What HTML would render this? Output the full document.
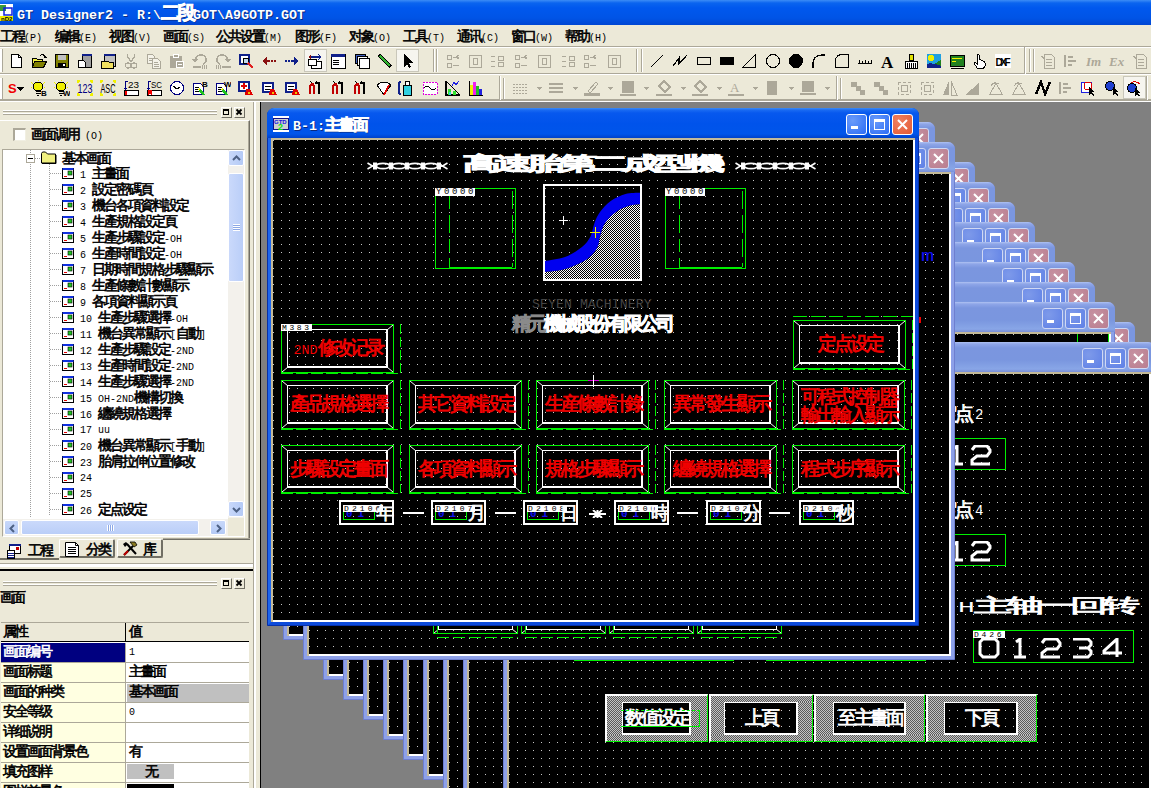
<!DOCTYPE html><html><head><meta charset="utf-8"><style>
*{margin:0;padding:0;box-sizing:border-box}
html,body{width:1151px;height:788px;overflow:hidden;background:#ECE9D8;font-family:"Liberation Sans",sans-serif;font-size:12px;position:relative}
div,svg{position:absolute}
b{font-weight:normal}
.a{font-family:"Liberation Mono",monospace;white-space:pre}
.c{display:inline-block;text-align:center;overflow:visible;white-space:nowrap}
.t{white-space:nowrap}
.act{background:linear-gradient(#3D8DF7 0,#1A6BF2 2px,#0758EE 5px,#0053EB 16px,#0055EA 26px,#0041C9 30px)}
.ina{background:linear-gradient(#B0C2F2 0,#8FA6E8 2px,#7B96DF 6px,#7A96DF 18px,#88A6E7 27px,#7B8FD8 30px)}
.dots{background-color:#000;background-image:linear-gradient(90deg,transparent 1px,#000 1px),linear-gradient(#C8C8C8 1px,#000 1px);background-size:8px 8px}
.chk{background:repeating-conic-gradient(#fff 0 25%,#000 0 50%) 0 0/2px 2px}
.gd{background:repeating-conic-gradient(#D8D8D8 0 25%,#808080 0 50%) 0 0/2px 2px}
</style></head><body>
<div style="left:0px;top:0px;width:1151px;height:25px;background:linear-gradient(#3C8CF6 0,#0A64EF 3px,#0058EE 8px,#0054E6 18px,#0046D3 25px)"></div>
<svg style="left:0;top:4px" width="14" height="17" viewBox="0 0 14 17"><rect x="0" y="0" width="13" height="12" fill="#fff"/><rect x="0" y="1" width="6" height="6" fill="#3A9A3A"/><rect x="4" y="4" width="8" height="7" fill="none" stroke="#1020E0" stroke-width="1.5"/><rect x="0" y="12" width="13" height="5" fill="#F0F000"/><text x="1" y="16.5" font-size="6" font-family="Liberation Sans" font-weight="bold" fill="#000">nD2</text></svg>
<div class="t" style="left:17px;top:5px;color:#fff;line-height:16px;text-shadow:1px 1px #0A2A80"><b class="a" style="font-weight:bold;font-size:13.33px;letter-spacing:0.00px">GT Designer2 - R:\</b><b class="c" style="font-weight:bold;width:16px;font-size:18.7px;-webkit-text-stroke:0.80px currentColor">二</b><b class="c" style="font-weight:bold;width:16px;font-size:18.7px;-webkit-text-stroke:0.80px currentColor">段</b><b class="a" style="font-weight:bold;font-size:13.33px;letter-spacing:0.00px">GOT\A9GOTP.GOT</b></div>
<div class="t" style="left:0px;top:29px;color:#000;line-height:14px;"><b class="c" style="width:12px;font-size:14.0px;-webkit-text-stroke:0.60px currentColor">工</b><b class="c" style="width:12px;font-size:14.0px;-webkit-text-stroke:0.60px currentColor">程</b><b class="a" style="font-size:10.00px;letter-spacing:0.00px">(P)</b></div>
<div class="t" style="left:55px;top:29px;color:#000;line-height:14px;"><b class="c" style="width:12px;font-size:14.0px;-webkit-text-stroke:0.60px currentColor">编</b><b class="c" style="width:12px;font-size:14.0px;-webkit-text-stroke:0.60px currentColor">辑</b><b class="a" style="font-size:10.00px;letter-spacing:0.00px">(E)</b></div>
<div class="t" style="left:109px;top:29px;color:#000;line-height:14px;"><b class="c" style="width:12px;font-size:14.0px;-webkit-text-stroke:0.60px currentColor">视</b><b class="c" style="width:12px;font-size:14.0px;-webkit-text-stroke:0.60px currentColor">图</b><b class="a" style="font-size:10.00px;letter-spacing:0.00px">(V)</b></div>
<div class="t" style="left:163px;top:29px;color:#000;line-height:14px;"><b class="c" style="width:12px;font-size:14.0px;-webkit-text-stroke:0.60px currentColor">画</b><b class="c" style="width:12px;font-size:14.0px;-webkit-text-stroke:0.60px currentColor">面</b><b class="a" style="font-size:10.00px;letter-spacing:0.00px">(S)</b></div>
<div class="t" style="left:216px;top:29px;color:#000;line-height:14px;"><b class="c" style="width:12px;font-size:14.0px;-webkit-text-stroke:0.60px currentColor">公</b><b class="c" style="width:12px;font-size:14.0px;-webkit-text-stroke:0.60px currentColor">共</b><b class="c" style="width:12px;font-size:14.0px;-webkit-text-stroke:0.60px currentColor">设</b><b class="c" style="width:12px;font-size:14.0px;-webkit-text-stroke:0.60px currentColor">置</b><b class="a" style="font-size:10.00px;letter-spacing:0.00px">(M)</b></div>
<div class="t" style="left:295px;top:29px;color:#000;line-height:14px;"><b class="c" style="width:12px;font-size:14.0px;-webkit-text-stroke:0.60px currentColor">图</b><b class="c" style="width:12px;font-size:14.0px;-webkit-text-stroke:0.60px currentColor">形</b><b class="a" style="font-size:10.00px;letter-spacing:0.00px">(F)</b></div>
<div class="t" style="left:349px;top:29px;color:#000;line-height:14px;"><b class="c" style="width:12px;font-size:14.0px;-webkit-text-stroke:0.60px currentColor">对</b><b class="c" style="width:12px;font-size:14.0px;-webkit-text-stroke:0.60px currentColor">象</b><b class="a" style="font-size:10.00px;letter-spacing:0.00px">(O)</b></div>
<div class="t" style="left:403px;top:29px;color:#000;line-height:14px;"><b class="c" style="width:12px;font-size:14.0px;-webkit-text-stroke:0.60px currentColor">工</b><b class="c" style="width:12px;font-size:14.0px;-webkit-text-stroke:0.60px currentColor">具</b><b class="a" style="font-size:10.00px;letter-spacing:0.00px">(T)</b></div>
<div class="t" style="left:457px;top:29px;color:#000;line-height:14px;"><b class="c" style="width:12px;font-size:14.0px;-webkit-text-stroke:0.60px currentColor">通</b><b class="c" style="width:12px;font-size:14.0px;-webkit-text-stroke:0.60px currentColor">讯</b><b class="a" style="font-size:10.00px;letter-spacing:0.00px">(C)</b></div>
<div class="t" style="left:511px;top:29px;color:#000;line-height:14px;"><b class="c" style="width:12px;font-size:14.0px;-webkit-text-stroke:0.60px currentColor">窗</b><b class="c" style="width:12px;font-size:14.0px;-webkit-text-stroke:0.60px currentColor">口</b><b class="a" style="font-size:10.00px;letter-spacing:0.00px">(W)</b></div>
<div class="t" style="left:565px;top:29px;color:#000;line-height:14px;"><b class="c" style="width:12px;font-size:14.0px;-webkit-text-stroke:0.60px currentColor">帮</b><b class="c" style="width:12px;font-size:14.0px;-webkit-text-stroke:0.60px currentColor">助</b><b class="a" style="font-size:10.00px;letter-spacing:0.00px">(H)</b></div>
<div style="left:0px;top:46px;width:1151px;height:1px;background:#ACA899"></div>
<div style="left:0px;top:47px;width:1151px;height:1px;background:#fff"></div>
<div style="left:0px;top:73px;width:1151px;height:1px;background:#ACA899"></div>
<div style="left:0px;top:74px;width:1151px;height:1px;background:#fff"></div>
<div style="left:0px;top:99px;width:1151px;height:1px;background:#ACA899"></div>
<div style="left:0px;top:100px;width:1151px;height:1px;background:#ACA899"></div>
<div style="left:0px;top:101px;width:1151px;height:1px;background:#fff"></div>
<div style="left:0px;top:49px;width:3px;height:23px;border-left:2px solid #fff;border-right:1px solid #ACA899"></div>
<div style="left:304px;top:49px;width:23px;height:23px;background:#F6F5EF;border:1px solid #C9C7BA"></div>
<div style="left:396px;top:49px;width:23px;height:23px;background:#F6F5EF;border:1px solid #C9C7BA"></div>
<div style="left:433px;top:49px;width:2px;height:23px;border-left:1px solid #ACA899;border-right:1px solid #fff"></div>
<div style="left:436px;top:49px;width:2px;height:23px;border-left:1px solid #ACA899;border-right:1px solid #fff"></div>
<div style="left:636px;top:49px;width:2px;height:23px;border-left:1px solid #ACA899;border-right:1px solid #fff"></div>
<div style="left:641px;top:49px;width:2px;height:23px;border-left:1px solid #ACA899;border-right:1px solid #fff"></div>
<div style="left:1024px;top:47px;width:2px;height:27px;border-left:1px solid #ACA899;border-right:1px solid #fff"></div>
<div style="left:1029px;top:49px;width:2px;height:23px;border-left:1px solid #ACA899;border-right:1px solid #fff"></div>
<div style="left:1033px;top:49px;width:2px;height:23px;border-left:1px solid #ACA899;border-right:1px solid #fff"></div>
<svg style="left:8px;top:53px" width="16" height="16" viewBox="0 0 16 16" shape-rendering="crispEdges"><path d="M3.5 1.5h7l3 3v10h-10z" fill="#fff" stroke="#000"/><path d="M10.5 1.5v3h3" fill="none" stroke="#000"/></svg>
<svg style="left:31px;top:53px" width="16" height="16" viewBox="0 0 16 16" shape-rendering="crispEdges"><path d="M1.5 5.5h4l1 1h5v2h-8l-2 6z" fill="#F0F040" stroke="#000"/><path d="M1.5 14.5l2-6h12l-3 6z" fill="#808000" stroke="#000"/><path d="M8.5 3.5q2-3 5-1l1 2" fill="none" stroke="#000"/><path d="M13 5h3l-1.5-2z" fill="#000"/></svg>
<svg style="left:54px;top:53px" width="16" height="16" viewBox="0 0 16 16" shape-rendering="crispEdges"><rect x="1.5" y="1.5" width="13" height="13" fill="#808000" stroke="#000"/><rect x="4" y="2" width="8" height="5" fill="#C0C0C0"/><rect x="4" y="10" width="8" height="4" fill="#000"/><rect x="9" y="11" width="2" height="2" fill="#fff"/></svg>
<svg style="left:77px;top:53px" width="16" height="16" viewBox="0 0 16 16" shape-rendering="crispEdges"><rect x="5.5" y="1.5" width="9" height="13" fill="#A0A0A0" stroke="#000"/><rect x="5" y="1" width="10" height="2" fill="#10208A"/><path d="M1.5 7.5h5l2 2v5h-7z" fill="#fff" stroke="#000"/></svg>
<svg style="left:100px;top:53px" width="16" height="16" viewBox="0 0 16 16" shape-rendering="crispEdges"><rect x="4" y="1" width="11" height="12" fill="#C0C0C0" stroke="#000"/><rect x="4" y="1" width="11" height="2" fill="#10208A"/><path d="M1 8h7l1 1h4v6H1z" fill="#F0E060" stroke="#000"/></svg>
<svg style="left:123px;top:53px" width="16" height="16" viewBox="0 0 16 16" shape-rendering="crispEdges"><path d="M4.5 1v3l4 5M11.5 1v3l-4 5" fill="none" stroke="#ACA899" stroke-width="1.4"/><circle cx="5" cy="12.5" r="2.5" fill="none" stroke="#ACA899" stroke-width="1.3"/><circle cx="11" cy="12.5" r="2.5" fill="none" stroke="#ACA899" stroke-width="1.3"/></svg>
<svg style="left:146px;top:53px" width="16" height="16" viewBox="0 0 16 16" shape-rendering="crispEdges"><path d="M1.5 1.5h5l2 2v7h-7z" fill="#F4F2E8" stroke="#ACA899"/><path d="M6.5 5.5h5l3 3v7h-8z" fill="#F4F2E8" stroke="#ACA899"/><path d="M3 5h3M3 7h3M8 9h4M8 11h5M8 13h5" stroke="#ACA899"/></svg>
<svg style="left:169px;top:53px" width="16" height="16" viewBox="0 0 16 16" shape-rendering="crispEdges"><rect x="1" y="3" width="12" height="12" rx="1" fill="#ACA899"/><rect x="4.5" y="1.5" width="5" height="3" fill="#ACA899" stroke="#fff"/><rect x="7.5" y="8.5" width="7" height="6" fill="#ACA899" stroke="#fff"/><path d="M9 11h4" stroke="#fff"/></svg>
<svg style="left:192px;top:53px" width="16" height="16" viewBox="0 0 16 16" shape-rendering="crispEdges"><path d="M3 8q1-6 6-6q5 0 5 5q0 3-3 4" fill="none" stroke="#ACA899" stroke-width="1.6"/><path d="M0 6l3 4l3-4z" fill="#ACA899"/><path d="M1 14h8" stroke="#ACA899" stroke-width="2"/><path d="M10 12v4M12 12v4M14 12v4" stroke="#ACA899"/></svg>
<svg style="left:215px;top:53px" width="16" height="16" viewBox="0 0 16 16" shape-rendering="crispEdges"><path d="M13 8q-1-6-6-6q-5 0-5 5q0 3 3 4" fill="none" stroke="#ACA899" stroke-width="1.6"/><path d="M16 6l-3 4l-3-4z" fill="#ACA899"/><path d="M7 14h9" stroke="#ACA899" stroke-width="2"/><path d="M1 12v4M3 12v4M5 12v4" stroke="#ACA899"/></svg>
<svg style="left:239px;top:53px" width="16" height="16" viewBox="0 0 16 16" shape-rendering="crispEdges"><rect x="1" y="2" width="9" height="9" fill="#fff" stroke="#10208A" stroke-width="1.5"/><circle cx="7" cy="8" r="3" fill="#C0D8F0" stroke="#000"/><path d="M9 10l5 5" stroke="#E02020" stroke-width="1.5"/></svg>
<svg style="left:261px;top:53px" width="16" height="16" viewBox="0 0 16 16" shape-rendering="crispEdges"><path d="M1 8l5-4v3h3v2H6v3z" fill="#8A1010"/><path d="M10 7h2v2h-2zM13 7h2v2h-2z" fill="#8A1010"/></svg>
<svg style="left:284px;top:53px" width="16" height="16" viewBox="0 0 16 16" shape-rendering="crispEdges"><path d="M15 8l-5-4v3H7v2h3v3z" fill="#10208A"/><path d="M1 7h2v2H1zM4 7h2v2H4z" fill="#10208A"/></svg>
<svg style="left:307px;top:53px" width="16" height="16" viewBox="0 0 16 16" shape-rendering="crispEdges"><path d="M2 4h12M11 1l3 3l-3 3" fill="none" stroke="#10208A" stroke-width="1.2"/><path d="M1 4l3-3v6z" fill="#8A1010"/><rect x="4" y="8" width="10" height="7" fill="#fff" stroke="#000"/><rect x="1" y="6" width="8" height="6" fill="#fff" stroke="#000"/></svg>
<svg style="left:330px;top:53px" width="16" height="16" viewBox="0 0 16 16" shape-rendering="crispEdges"><rect x="1" y="1" width="14" height="14" fill="#fff" stroke="#000"/><rect x="1" y="1" width="14" height="3" fill="#10208A"/><path d="M3 7h6M3 9h6M3 11h6" stroke="#000"/></svg>
<svg style="left:354px;top:53px" width="16" height="16" viewBox="0 0 16 16" shape-rendering="crispEdges"><rect x="1" y="1" width="10" height="9" fill="#4060C0" stroke="#000"/><rect x="3" y="3" width="10" height="9" fill="#fff" stroke="#000"/><rect x="5" y="5" width="10" height="10" fill="#fff" stroke="#000"/></svg>
<svg style="left:377px;top:53px" width="16" height="16" viewBox="0 0 16 16" shape-rendering="crispEdges"><path d="M2 2l12 12" stroke="#000" stroke-width="3"/><path d="M3 3l10 10" stroke="#30B030" stroke-width="1.5"/></svg>
<svg style="left:400px;top:53px" width="16" height="16" viewBox="0 0 16 16" shape-rendering="crispEdges"><path d="M4 1v13l3-3l2 4l2-1l-2-4h4z" fill="#000"/></svg>
<svg style="left:445px;top:53px" width="16" height="16" viewBox="0 0 16 16" shape-rendering="crispEdges"><path d="M2 2h4v4H2zM2 10h4v4H2z" fill="none" stroke="#ACA899"/><path d="M8 4h6M8 12h6M14 2l-3 2l3 2" fill="none" stroke="#ACA899"/></svg>
<svg style="left:467px;top:53px" width="16" height="16" viewBox="0 0 16 16" shape-rendering="crispEdges"><rect x="2" y="2" width="12" height="12" fill="none" stroke="#ACA899"/><rect x="6" y="5" width="4" height="6" fill="none" stroke="#ACA899"/></svg>
<svg style="left:489px;top:53px" width="16" height="16" viewBox="0 0 16 16" shape-rendering="crispEdges"><path d="M2 3h4M2 8h4M2 13h4M9 3h5v4H9zM9 9h5v4H9z" fill="none" stroke="#ACA899"/></svg>
<svg style="left:513px;top:53px" width="16" height="16" viewBox="0 0 16 16" shape-rendering="crispEdges"><path d="M2 2h4v4H2zM2 10h4v4H2z" fill="none" stroke="#ACA899"/><path d="M8 4h6M8 12h6M14 2l-3 2l3 2" fill="none" stroke="#ACA899"/></svg>
<svg style="left:536px;top:53px" width="16" height="16" viewBox="0 0 16 16" shape-rendering="crispEdges"><rect x="2" y="2" width="12" height="12" fill="none" stroke="#ACA899"/><rect x="6" y="5" width="4" height="6" fill="none" stroke="#ACA899"/></svg>
<svg style="left:560px;top:53px" width="16" height="16" viewBox="0 0 16 16" shape-rendering="crispEdges"><path d="M2 3h4M2 8h4M2 13h4M9 3h5v4H9zM9 9h5v4H9z" fill="none" stroke="#ACA899"/></svg>
<svg style="left:582px;top:53px" width="16" height="16" viewBox="0 0 16 16" shape-rendering="crispEdges"><path d="M2 2h4v4H2zM2 10h4v4H2z" fill="none" stroke="#ACA899"/><path d="M8 4h6M8 12h6M14 2l-3 2l3 2" fill="none" stroke="#ACA899"/></svg>
<svg style="left:606px;top:53px" width="16" height="16" viewBox="0 0 16 16" shape-rendering="crispEdges"><rect x="2" y="2" width="12" height="12" fill="none" stroke="#ACA899"/><rect x="6" y="5" width="4" height="6" fill="none" stroke="#ACA899"/></svg>
<svg style="left:649px;top:53px" width="16" height="16" viewBox="0 0 16 16" shape-rendering="crispEdges"><path d="M2 14L14 2" stroke="#000" stroke-width="1.2"/></svg>
<svg style="left:672px;top:53px" width="16" height="16" viewBox="0 0 16 16" shape-rendering="crispEdges"><path d="M1 13l6-8v6l8-9" fill="none" stroke="#000" stroke-width="1.2"/></svg>
<svg style="left:696px;top:53px" width="16" height="16" viewBox="0 0 16 16" shape-rendering="crispEdges"><rect x="1.5" y="4.5" width="13" height="7" fill="none" stroke="#000"/></svg>
<svg style="left:719px;top:53px" width="16" height="16" viewBox="0 0 16 16" shape-rendering="crispEdges"><rect x="1" y="4" width="14" height="8" fill="#000"/></svg>
<svg style="left:741px;top:53px" width="16" height="16" viewBox="0 0 16 16" shape-rendering="crispEdges"><path d="M1.5 14.5h13v-13z" fill="none" stroke="#000"/></svg>
<svg style="left:765px;top:53px" width="16" height="16" viewBox="0 0 16 16" shape-rendering="crispEdges"><circle cx="8" cy="8" r="6.5" fill="none" stroke="#000"/></svg>
<svg style="left:788px;top:53px" width="16" height="16" viewBox="0 0 16 16" shape-rendering="crispEdges"><circle cx="8" cy="8" r="7" fill="#000"/></svg>
<svg style="left:811px;top:53px" width="16" height="16" viewBox="0 0 16 16" shape-rendering="crispEdges"><path d="M2 15v-4q0-9 10-9h2" fill="none" stroke="#000" stroke-width="1.2"/></svg>
<svg style="left:834px;top:53px" width="16" height="16" viewBox="0 0 16 16" shape-rendering="crispEdges"><path d="M1.5 14.5v-6q0-7 7-7h6v13z" fill="none" stroke="#000"/></svg>
<svg style="left:857px;top:53px" width="16" height="16" viewBox="0 0 16 16" shape-rendering="crispEdges"><path d="M1 10h14M2 7v3M5 8v2M8 7v3M11 8v2M14 7v3" fill="none" stroke="#000"/></svg>
<svg style="left:880px;top:53px" width="16" height="16" viewBox="0 0 16 16" shape-rendering="crispEdges"><text x="1" y="15" font-family="Liberation Serif" font-weight="bold" font-size="17" fill="#000">A</text></svg>
<svg style="left:903px;top:53px" width="16" height="16" viewBox="0 0 16 16" shape-rendering="crispEdges"><rect x="6" y="1" width="4" height="6" fill="#E0E000" stroke="#000"/><path d="M2 8h12v7H2z" fill="#fff" stroke="#000"/><path d="M4 10v5M6 10v5M8 10v5M10 10v5M12 10v5" stroke="#000"/></svg>
<svg style="left:926px;top:53px" width="16" height="16" viewBox="0 0 16 16" shape-rendering="crispEdges"><rect x="1" y="1" width="14" height="14" fill="#20A0E0"/><circle cx="5" cy="5" r="3" fill="#F0F000"/><path d="M1 15l14-8v8z" fill="#208020"/><path d="M1 11q6-2 14 2v2H1z" fill="#10208A"/></svg>
<svg style="left:949px;top:53px" width="16" height="16" viewBox="0 0 16 16" shape-rendering="crispEdges"><rect x="1" y="2" width="14" height="11" fill="#208020" stroke="#000"/><path d="M3 5h10M3 8h4" stroke="#F0F000"/><path d="M2 15h13" stroke="#000"/></svg>
<svg style="left:972px;top:53px" width="16" height="16" viewBox="0 0 16 16" shape-rendering="crispEdges"><path d="M5 15l-3-5q0-2 2 0l1 1V2q1-2 2 0v5l1-1q1 0 1 1l1 0q1 0 1 1l1 0q1 1 1 2v3l-2 3z" fill="#fff" stroke="#000"/></svg>
<svg style="left:995px;top:53px" width="16" height="16" viewBox="0 0 16 16" shape-rendering="crispEdges"><rect x="0" y="1" width="16" height="14" fill="#fff"/><text x="0.5" y="12.5" font-family="Liberation Sans" font-weight="bold" font-size="10" fill="#000" textLength="15">DXF</text></svg>
<svg style="left:1040px;top:53px" width="16" height="16" viewBox="0 0 16 16" shape-rendering="crispEdges"><path d="M4 1h7l3 3v11H4z" fill="none" stroke="#ACA899"/><path d="M6 6h6M6 9h6M6 12h6" stroke="#ACA899"/><path d="M1 3l4 3" stroke="#ACA899"/></svg>
<svg style="left:1063px;top:53px" width="16" height="16" viewBox="0 0 16 16" shape-rendering="crispEdges"><path d="M2 2v12M5 4h5M5 8h8M5 12h4" stroke="#ACA899" stroke-width="2"/></svg>
<svg style="left:1086px;top:53px" width="16" height="16" viewBox="0 0 16 16" shape-rendering="crispEdges"><text x="0" y="13" font-family="Liberation Serif" font-style="italic" font-weight="bold" font-size="13" fill="#ACA899">Im</text></svg>
<svg style="left:1109px;top:53px" width="16" height="16" viewBox="0 0 16 16" shape-rendering="crispEdges"><text x="0" y="13" font-family="Liberation Serif" font-style="italic" font-weight="bold" font-size="13" fill="#ACA899">Ex</text></svg>
<svg style="left:1132px;top:53px" width="16" height="16" viewBox="0 0 16 16" shape-rendering="crispEdges"><path d="M4 1h7l3 3v11H4z" fill="none" stroke="#ACA899"/><path d="M6 6h6M6 9h6M6 12h6" stroke="#ACA899"/><path d="M1 3l4 3" stroke="#ACA899"/></svg>
<div style="left:0px;top:78px;width:3px;height:21px;border-left:2px solid #fff;border-right:1px solid #ACA899"></div>
<div style="left:499px;top:76px;width:2px;height:24px;border-left:1px solid #ACA899;border-right:1px solid #fff"></div>
<div style="left:503px;top:78px;width:2px;height:21px;border-left:1px solid #ACA899;border-right:1px solid #fff"></div>
<div style="left:836px;top:76px;width:2px;height:24px;border-left:1px solid #ACA899;border-right:1px solid #fff"></div>
<div style="left:840px;top:78px;width:2px;height:21px;border-left:1px solid #ACA899;border-right:1px solid #fff"></div>
<div style="left:1123px;top:76px;width:23px;height:23px;background:#F6F5EF;border:1px solid #C9C7BA"></div>
<div style="left:1146px;top:76px;width:2px;height:24px;border-left:1px solid #ACA899;border-right:1px solid #fff"></div>
<svg style="left:8px;top:80px" width="16" height="16" viewBox="0 0 16 16" shape-rendering="crispEdges"><text x="0" y="13" font-family="Liberation Sans" font-weight="bold" font-size="13" fill="#F00000">S</text><path d="M9 7h7l-3.5 4z" fill="#000"/></svg>
<svg style="left:31px;top:80px" width="16" height="16" viewBox="0 0 16 16" shape-rendering="crispEdges"><path d="M0 2l2 2M12 4l2-2M7 0v1M0 7h1M13 7h1" stroke="#F0F000"/><circle cx="7" cy="6.5" r="4.5" fill="#F0F000" stroke="#000"/><path d="M4.5 11.5h5M4.5 13.5h5M6 15.5h2" stroke="#000"/><text x="10" y="16" font-size="8" font-family="Liberation Sans" font-weight="bold" fill="#000">B</text></svg>
<svg style="left:54px;top:80px" width="16" height="16" viewBox="0 0 16 16" shape-rendering="crispEdges"><path d="M0 2l2 2M12 4l2-2M7 0v1M0 7h1M13 7h1" stroke="#F0F000"/><circle cx="7" cy="6.5" r="4.5" fill="#F0F000" stroke="#000"/><path d="M4.5 11.5h5M4.5 13.5h5M6 15.5h2" stroke="#000"/><text x="9" y="16" font-size="8" font-family="Liberation Sans" font-weight="bold" fill="#000">W</text></svg>
<svg style="left:77px;top:80px" width="16" height="16" viewBox="0 0 16 16" shape-rendering="crispEdges"><path d="M0 1h3M13 1h3M0 15h3M13 15h3M1 0v3M15 0v3M1 13v3M15 13v3" stroke="#F0F000" stroke-width="2"/><text x="0.5" y="13" font-family="Liberation Sans" font-size="12" fill="#000080" textLength="15" lengthAdjust="spacingAndGlyphs">123</text></svg>
<svg style="left:100px;top:80px" width="16" height="16" viewBox="0 0 16 16" shape-rendering="crispEdges"><path d="M0 1h3M13 1h3M0 15h3M13 15h3M1 0v3M15 0v3M1 13v3M15 13v3" stroke="#F0F000" stroke-width="2"/><text x="0.5" y="13" font-family="Liberation Sans" font-size="12" fill="#000" textLength="15" lengthAdjust="spacingAndGlyphs">ASC</text></svg>
<svg style="left:123px;top:80px" width="16" height="16" viewBox="0 0 16 16" shape-rendering="crispEdges"><text x="5" y="8" font-family="Liberation Sans" font-size="9" fill="#000" textLength="11" lengthAdjust="spacingAndGlyphs">23</text><rect x="1.5" y="10.5" width="14" height="5" fill="#fff" stroke="#000"/><path d="M3 11v4" stroke="#F00000" stroke-width="2"/><path d="M2.5 9V1.5h2" fill="none" stroke="#000080"/><path d="M1 8h3l-1.5 2z" fill="#000080"/></svg>
<svg style="left:146px;top:80px" width="16" height="16" viewBox="0 0 16 16" shape-rendering="crispEdges"><text x="5" y="8" font-family="Liberation Sans" font-size="9" fill="#000" textLength="11" lengthAdjust="spacingAndGlyphs">SC</text><rect x="1.5" y="10.5" width="14" height="5" fill="#fff" stroke="#000"/><path d="M2.5 15v-4h3v4M2.5 13h3" fill="none" stroke="#F00000" stroke-width="1.2"/><path d="M2.5 9V1.5h2" fill="none" stroke="#000080"/><path d="M1 8h3l-1.5 2z" fill="#000080"/></svg>
<svg style="left:169px;top:80px" width="16" height="16" viewBox="0 0 16 16" shape-rendering="crispEdges"><circle cx="8" cy="8" r="6.5" fill="#fff" stroke="#000080" stroke-width="1.3"/><path d="M4 6l4 3l3-2" fill="none" stroke="#000" stroke-width="1.2"/></svg>
<svg style="left:192px;top:80px" width="16" height="16" viewBox="0 0 16 16" shape-rendering="crispEdges"><path d="M1.5 3.5h7l3 3v8h-10z" fill="#fff" stroke="#000080" stroke-width="1.2"/><path d="M3 7h4M3 9h3M3 11h4" stroke="#000"/><path d="M7 9l5 6" stroke="#20C020" stroke-width="2.5"/><path d="M7 9l1 1" stroke="#F0F000" stroke-width="2"/><text x="10" y="7" font-size="8" font-family="Liberation Sans" font-weight="bold" fill="#000">B</text></svg>
<svg style="left:215px;top:80px" width="16" height="16" viewBox="0 0 16 16" shape-rendering="crispEdges"><path d="M1.5 3.5h7l3 3v8h-10z" fill="#fff" stroke="#000080" stroke-width="1.2"/><path d="M3 7h4M3 9h3M3 11h4" stroke="#000"/><path d="M7 9l5 6" stroke="#20C020" stroke-width="2.5"/><path d="M7 9l1 1" stroke="#F0F000" stroke-width="2"/><text x="9" y="7" font-size="8" font-family="Liberation Sans" font-weight="bold" fill="#000">W</text></svg>
<svg style="left:238px;top:80px" width="16" height="16" viewBox="0 0 16 16" shape-rendering="crispEdges"><rect x="1" y="2" width="10" height="9" fill="#fff" stroke="#10208A" stroke-width="1.5"/><path d="M3 6h6M6 3v6" stroke="#E00000" stroke-width="2"/><path d="M8 9l4 0l3 6H7z" fill="#E00000"/><circle cx="11" cy="13" r="1.5" fill="#F0C000"/></svg>
<svg style="left:262px;top:80px" width="16" height="16" viewBox="0 0 16 16" shape-rendering="crispEdges"><rect x="1" y="3" width="10" height="9" fill="#fff" stroke="#10208A" stroke-width="1.5"/><path d="M3 6h6M3 9h6" stroke="#000"/><path d="M8 9l4 0l3 6H7z" fill="#E00000"/><circle cx="11" cy="13" r="1.5" fill="#F0C000"/></svg>
<svg style="left:285px;top:80px" width="16" height="16" viewBox="0 0 16 16" shape-rendering="crispEdges"><rect x="1" y="3" width="10" height="9" fill="#fff" stroke="#10208A" stroke-width="1.5"/><path d="M3 6h6M3 9h6" stroke="#000"/><path d="M8 9l4 0l3 6H7z" fill="#E00000"/><circle cx="11" cy="13" r="1.5" fill="#F0C000"/></svg>
<svg style="left:307px;top:80px" width="16" height="16" viewBox="0 0 16 16" shape-rendering="crispEdges"><path d="M2 8q0-5 3-5q3 0 3 5v6h-2V8q0-2-1-2q-1 0-1 2v6H2z" fill="#C00000"/><path d="M8 3h4v11" fill="none" stroke="#000" stroke-width="2"/><path d="M3 1l2 2M10 1l-1 2" stroke="#000"/></svg>
<svg style="left:330px;top:80px" width="16" height="16" viewBox="0 0 16 16" shape-rendering="crispEdges"><path d="M2 8q0-5 3-5q3 0 3 5v6h-2V8q0-2-1-2q-1 0-1 2v6H2z" fill="#C00000"/><path d="M8 3h4v11" fill="none" stroke="#000" stroke-width="2"/><path d="M3 1l2 2M10 1l-1 2" stroke="#000"/></svg>
<svg style="left:352px;top:80px" width="16" height="16" viewBox="0 0 16 16" shape-rendering="crispEdges"><path d="M2 8q0-5 3-5q3 0 3 5v6h-2V8q0-2-1-2q-1 0-1 2v6H2z" fill="#C00000"/><path d="M8 3h4v11" fill="none" stroke="#000" stroke-width="2"/><path d="M3 1l2 2M10 1l-1 2" stroke="#000"/></svg>
<svg style="left:376px;top:80px" width="16" height="16" viewBox="0 0 16 16" shape-rendering="crispEdges"><path d="M8 15L1 5q7-6 14 0z" fill="#fff" stroke="#000"/><path d="M8 15l5-10" stroke="#E00000" stroke-width="1.5"/></svg>
<svg style="left:398px;top:80px" width="16" height="16" viewBox="0 0 16 16" shape-rendering="crispEdges"><path d="M1 2v12M1 2h2M1 14h2" stroke="#10208A" stroke-width="1.5"/><rect x="7" y="1" width="4" height="4" fill="#fff" stroke="#000"/><rect x="5" y="5" width="8" height="10" fill="#30D0E0" stroke="#000"/></svg>
<svg style="left:422px;top:80px" width="16" height="16" viewBox="0 0 16 16" shape-rendering="crispEdges"><rect x="1" y="2" width="14" height="12" fill="#fff" stroke="#E000E0" stroke-dasharray="2 1"/><path d="M2 8q3-4 6 0q3 4 6 0" fill="none" stroke="#000"/></svg>
<svg style="left:445px;top:80px" width="16" height="16" viewBox="0 0 16 16" shape-rendering="crispEdges"><path d="M1 1v14h14" stroke="#000" stroke-width="1.5" fill="none"/><path d="M3 9h3v6H3zM8 11h3v4H8z" fill="#30E030"/><path d="M4 12h2v3H4z" fill="#30D0E0"/><path d="M1 1l14 14" stroke="#000"/><path d="M7 6l2-4l2 3l3-4" fill="none" stroke="#2020E0"/></svg>
<svg style="left:468px;top:80px" width="16" height="16" viewBox="0 0 16 16" shape-rendering="crispEdges"><path d="M1 1v14h14" stroke="#000" fill="none"/><rect x="2" y="5" width="3" height="10" fill="#F0F000"/><rect x="5" y="2" width="3" height="13" fill="#F020F0"/><rect x="8" y="6" width="3" height="9" fill="#20C020"/><rect x="11" y="9" width="3" height="6" fill="#2020E0"/></svg>
<svg style="left:512px;top:80px" width="16" height="16" viewBox="0 0 16 16" shape-rendering="crispEdges"><path d="M1 4h14M1 7h14M1 10h14M1 13h14" stroke="#ACA899" stroke-dasharray="2 1"/></svg>
<svg style="left:531px;top:80px" width="16" height="16" viewBox="0 0 16 16" shape-rendering="crispEdges"><path d="M5 7h6l-3 3z" fill="#ACA899"/></svg>
<svg style="left:548px;top:80px" width="16" height="16" viewBox="0 0 16 16" shape-rendering="crispEdges"><path d="M1 4h14M1 8h14M1 12h14" stroke="#ACA899" stroke-width="2"/></svg>
<svg style="left:567px;top:80px" width="16" height="16" viewBox="0 0 16 16" shape-rendering="crispEdges"><path d="M5 7h6l-3 3z" fill="#ACA899"/></svg>
<svg style="left:584px;top:80px" width="16" height="16" viewBox="0 0 16 16" shape-rendering="crispEdges"><path d="M4 11l8-9l2 2l-8 9z" fill="none" stroke="#ACA899"/><path d="M0 14h16" stroke="#ACA899" stroke-width="3"/></svg>
<svg style="left:602px;top:80px" width="16" height="16" viewBox="0 0 16 16" shape-rendering="crispEdges"><path d="M5 7h6l-3 3z" fill="#ACA899"/></svg>
<svg style="left:620px;top:80px" width="16" height="16" viewBox="0 0 16 16" shape-rendering="crispEdges"><rect x="2" y="1" width="12" height="12" fill="#ACA899"/><path d="M0 15h16" stroke="#ACA899" stroke-width="2"/></svg>
<svg style="left:638px;top:80px" width="16" height="16" viewBox="0 0 16 16" shape-rendering="crispEdges"><path d="M5 7h6l-3 3z" fill="#ACA899"/></svg>
<svg style="left:656px;top:80px" width="16" height="16" viewBox="0 0 16 16" shape-rendering="crispEdges"><path d="M3 6l5-5l6 6l-5 5z" fill="none" stroke="#ACA899" stroke-width="1.5"/><path d="M0 15h16" stroke="#ACA899" stroke-width="2"/></svg>
<svg style="left:675px;top:80px" width="16" height="16" viewBox="0 0 16 16" shape-rendering="crispEdges"><path d="M5 7h6l-3 3z" fill="#ACA899"/></svg>
<svg style="left:692px;top:80px" width="16" height="16" viewBox="0 0 16 16" shape-rendering="crispEdges"><path d="M3 6l5-5l6 6l-5 5z" fill="none" stroke="#ACA899" stroke-width="1.5"/><path d="M0 15h16" stroke="#ACA899" stroke-width="2"/></svg>
<svg style="left:711px;top:80px" width="16" height="16" viewBox="0 0 16 16" shape-rendering="crispEdges"><path d="M5 7h6l-3 3z" fill="#ACA899"/></svg>
<svg style="left:728px;top:80px" width="16" height="16" viewBox="0 0 16 16" shape-rendering="crispEdges"><text x="2" y="12" font-family="Liberation Serif" font-size="13" fill="#ACA899">A</text><path d="M0 15h16" stroke="#ACA899" stroke-width="2"/></svg>
<svg style="left:747px;top:80px" width="16" height="16" viewBox="0 0 16 16" shape-rendering="crispEdges"><path d="M5 7h6l-3 3z" fill="#ACA899"/></svg>
<svg style="left:764px;top:80px" width="16" height="16" viewBox="0 0 16 16" shape-rendering="crispEdges"><rect x="3" y="1" width="10" height="14" fill="#ACA899"/></svg>
<svg style="left:783px;top:80px" width="16" height="16" viewBox="0 0 16 16" shape-rendering="crispEdges"><path d="M5 7h6l-3 3z" fill="#ACA899"/></svg>
<svg style="left:800px;top:80px" width="16" height="16" viewBox="0 0 16 16" shape-rendering="crispEdges"><rect x="2" y="1" width="12" height="11" fill="#ACA899"/><path d="M0 14h16" stroke="#ACA899" stroke-width="2"/></svg>
<svg style="left:819px;top:80px" width="16" height="16" viewBox="0 0 16 16" shape-rendering="crispEdges"><path d="M5 7h6l-3 3z" fill="#ACA899"/></svg>
<svg style="left:850px;top:80px" width="16" height="16" viewBox="0 0 16 16" shape-rendering="crispEdges"><path d="M1 2h6v4h4v4h4v5h-5v-4H6V7H1z" fill="#ACA899"/></svg>
<svg style="left:873px;top:80px" width="16" height="16" viewBox="0 0 16 16" shape-rendering="crispEdges"><path d="M1 2h6v4h4v4h4v5h-5v-4H6V7H1z" fill="#ACA899"/></svg>
<svg style="left:896px;top:80px" width="16" height="16" viewBox="0 0 16 16" shape-rendering="crispEdges"><path d="M2 2h12v12H2z" fill="none" stroke="#ACA899" stroke-dasharray="3 2"/><rect x="5" y="5" width="6" height="6" fill="none" stroke="#ACA899"/></svg>
<svg style="left:919px;top:80px" width="16" height="16" viewBox="0 0 16 16" shape-rendering="crispEdges"><path d="M2 2h12v12H2z" fill="none" stroke="#ACA899" stroke-dasharray="3 2"/><rect x="5" y="5" width="6" height="6" fill="none" stroke="#ACA899"/></svg>
<svg style="left:942px;top:80px" width="16" height="16" viewBox="0 0 16 16" shape-rendering="crispEdges"><path d="M7 1v14H1z" fill="#ACA899"/><path d="M9 1v14h6z" fill="none" stroke="#ACA899"/></svg>
<svg style="left:964px;top:80px" width="16" height="16" viewBox="0 0 16 16" shape-rendering="crispEdges"><path d="M15 3v12H1z" fill="#ACA899"/></svg>
<svg style="left:988px;top:80px" width="16" height="16" viewBox="0 0 16 16" shape-rendering="crispEdges"><path d="M2 14h12L8 3z" fill="none" stroke="#ACA899"/><path d="M3 6q3-5 8-2" fill="none" stroke="#ACA899"/></svg>
<svg style="left:1011px;top:80px" width="16" height="16" viewBox="0 0 16 16" shape-rendering="crispEdges"><path d="M2 14h12L8 3z" fill="none" stroke="#ACA899"/><path d="M3 6q3-5 8-2" fill="none" stroke="#ACA899"/></svg>
<svg style="left:1035px;top:80px" width="16" height="16" viewBox="0 0 16 16" shape-rendering="crispEdges"><path d="M1 14l5-12l4 12l5-12" fill="none" stroke="#000" stroke-width="2.5"/></svg>
<svg style="left:1058px;top:80px" width="16" height="16" viewBox="0 0 16 16" shape-rendering="crispEdges"><path d="M2 2v12M5 4h5M5 8h8M5 12h4" stroke="#ACA899" stroke-width="2"/></svg>
<svg style="left:1080px;top:80px" width="16" height="16" viewBox="0 0 16 16" shape-rendering="crispEdges"><rect x="1" y="2" width="10" height="10" fill="#fff" stroke="#2020E0"/><circle cx="8" cy="6" r="4" fill="none" stroke="#E00000"/><path d="M9 7v8l2-2l2 3l1-1l-2-3h3z" fill="#000"/></svg>
<svg style="left:1104px;top:80px" width="16" height="16" viewBox="0 0 16 16" shape-rendering="crispEdges"><circle cx="6" cy="6" r="4.5" fill="#2040D0" stroke="#000"/><path d="M9 7v8l2-2l2 3l1-1l-2-3h3z" fill="#000"/></svg>
<svg style="left:1126px;top:80px" width="16" height="16" viewBox="0 0 16 16" shape-rendering="crispEdges"><circle cx="6" cy="8" r="4.5" fill="#2040D0" stroke="#000"/><path d="M5 3q5-3 9 1" fill="none" stroke="#E00000"/><path d="M9 8v8l2-2l2 3l1-1l-2-3h3z" fill="#000"/></svg>
<div style="left:253px;top:102px;width:1px;height:686px;background:#ACA899"></div>
<div style="left:254px;top:102px;width:2px;height:686px;background:#fff"></div>
<div style="left:260px;top:102px;width:1px;height:686px;background:#000"></div>
<div style="left:3px;top:110px;width:214px;height:1px;background:#fff"></div><div style="left:3px;top:111px;width:214px;height:1px;background:#ACA899"></div><div style="left:3px;top:113px;width:214px;height:1px;background:#fff"></div><div style="left:3px;top:114px;width:214px;height:1px;background:#ACA899"></div><div style="left:221px;top:107px;width:11px;height:11px;background:#ECE9D8;border-top:1px solid #fff;border-left:1px solid #fff;border-right:1px solid #716F64;border-bottom:1px solid #716F64"></div><div style="left:223px;top:109px;width:6px;height:6px;border:1px solid #000;border-top-width:2px"></div><div style="left:234px;top:107px;width:11px;height:11px;background:#ECE9D8;border-top:1px solid #fff;border-left:1px solid #fff;border-right:1px solid #716F64;border-bottom:1px solid #716F64"></div><svg style="left:234px;top:107px" width="11" height="11"><path d="M2.5 2.5l5 5M7.5 2.5l-5 5" stroke="#000" stroke-width="1.8"/></svg>
<div style="left:0px;top:120px;width:250px;height:420px;border-top:1px solid #fff;border-right:1px solid #716F64;box-shadow:inset -1px 0 #ACA899"></div>
<div style="left:163px;top:538px;width:87px;height:2px;border-top:1px solid #ACA899;border-bottom:1px solid #716F64"></div>
<div style="left:13px;top:128px;width:13px;height:13px;background:#fff;border-top:2px solid #ACA899;border-left:2px solid #ACA899;border-right:1px solid #F1EFE2;border-bottom:1px solid #F1EFE2"></div>
<div class="t" style="left:31px;top:128px;color:#000;line-height:13px;"><b class="c" style="width:12px;font-size:14.0px;-webkit-text-stroke:0.60px currentColor">画</b><b class="c" style="width:12px;font-size:14.0px;-webkit-text-stroke:0.60px currentColor">面</b><b class="c" style="width:12px;font-size:14.0px;-webkit-text-stroke:0.60px currentColor">调</b><b class="c" style="width:12px;font-size:14.0px;-webkit-text-stroke:0.60px currentColor">用</b><b class="a" style="font-size:10.00px;letter-spacing:0.00px"> (O)</b></div>
<div style="left:2px;top:149px;width:243px;height:388px;background:#fff;border-top:1px solid #ACA899;border-left:1px solid #ACA899;border-right:1px solid #fff;border-bottom:1px solid #fff"></div>
<div style="left:30px;top:150px;width:1px;height:368px;background:repeating-linear-gradient(#A0A0A0 0 1px,transparent 1px 2px)"></div>
<div style="left:49px;top:164px;width:1px;height:352px;background:repeating-linear-gradient(#A0A0A0 0 1px,transparent 1px 2px)"></div>
<div style="left:35px;top:158px;width:6px;height:1px;background:repeating-linear-gradient(90deg,#A0A0A0 0 1px,transparent 1px 2px)"></div>
<div style="left:26px;top:154px;width:9px;height:9px;background:#fff;border:1px solid #ACA899"><div style="left:1px;top:3px;width:5px;height:1px;background:#000"></div></div>
<svg style="left:41px;top:151px" width="16" height="13"><path d="M0.5 2.5v9.5h14v-9h-8l-2-2h-3z" fill="#F0F080" stroke="#000"/><path d="M1 12.5h14V4" stroke="#000" fill="none"/></svg>
<div class="t" style="left:62px;top:152px;color:#000;line-height:13px;"><b class="c" style="width:12px;font-size:14.0px;-webkit-text-stroke:0.60px currentColor">基</b><b class="c" style="width:12px;font-size:14.0px;-webkit-text-stroke:0.60px currentColor">本</b><b class="c" style="width:12px;font-size:14.0px;-webkit-text-stroke:0.60px currentColor">画</b><b class="c" style="width:12px;font-size:14.0px;-webkit-text-stroke:0.60px currentColor">面</b></div>
<div style="left:50px;top:173px;width:11px;height:1px;background:repeating-linear-gradient(90deg,#A0A0A0 0 1px,transparent 1px 2px)"></div>
<svg style="left:62px;top:168px" width="13" height="11"><rect x="0.5" y="0.5" width="11" height="10" fill="#fff" stroke="#000"/><rect x="0.5" y="0" width="11" height="2" fill="#1030E0"/><rect x="6" y="3" width="4" height="4" fill="#20C020" stroke="#000" stroke-width="0.6"/><path d="M2 8.5h3" stroke="#E00000"/></svg>
<div class="t" style="left:80px;top:167px;color:#000;line-height:13px;"><b class="a" style="font-size:10.00px;letter-spacing:0.00px">1 </b><b class="c" style="width:12px;font-size:14.0px;-webkit-text-stroke:0.60px currentColor">主</b><b class="c" style="width:12px;font-size:14.0px;-webkit-text-stroke:0.60px currentColor">畫</b><b class="c" style="width:12px;font-size:14.0px;-webkit-text-stroke:0.60px currentColor">面</b></div>
<div style="left:50px;top:189px;width:11px;height:1px;background:repeating-linear-gradient(90deg,#A0A0A0 0 1px,transparent 1px 2px)"></div>
<svg style="left:62px;top:184px" width="13" height="11"><rect x="0.5" y="0.5" width="11" height="10" fill="#fff" stroke="#000"/><rect x="0.5" y="0" width="11" height="2" fill="#1030E0"/><rect x="6" y="3" width="4" height="4" fill="#20C020" stroke="#000" stroke-width="0.6"/><path d="M2 8.5h3" stroke="#E00000"/></svg>
<div class="t" style="left:80px;top:183px;color:#000;line-height:13px;"><b class="a" style="font-size:10.00px;letter-spacing:0.00px">2 </b><b class="c" style="width:12px;font-size:14.0px;-webkit-text-stroke:0.60px currentColor">設</b><b class="c" style="width:12px;font-size:14.0px;-webkit-text-stroke:0.60px currentColor">定</b><b class="c" style="width:12px;font-size:14.0px;-webkit-text-stroke:0.60px currentColor">密</b><b class="c" style="width:12px;font-size:14.0px;-webkit-text-stroke:0.60px currentColor">碼</b><b class="c" style="width:12px;font-size:14.0px;-webkit-text-stroke:0.60px currentColor">頁</b></div>
<div style="left:50px;top:205px;width:11px;height:1px;background:repeating-linear-gradient(90deg,#A0A0A0 0 1px,transparent 1px 2px)"></div>
<svg style="left:62px;top:200px" width="13" height="11"><rect x="0.5" y="0.5" width="11" height="10" fill="#fff" stroke="#000"/><rect x="0.5" y="0" width="11" height="2" fill="#1030E0"/><rect x="6" y="3" width="4" height="4" fill="#20C020" stroke="#000" stroke-width="0.6"/><path d="M2 8.5h3" stroke="#E00000"/></svg>
<div class="t" style="left:80px;top:199px;color:#000;line-height:13px;"><b class="a" style="font-size:10.00px;letter-spacing:0.00px">3 </b><b class="c" style="width:12px;font-size:14.0px;-webkit-text-stroke:0.60px currentColor">機</b><b class="c" style="width:12px;font-size:14.0px;-webkit-text-stroke:0.60px currentColor">台</b><b class="c" style="width:12px;font-size:14.0px;-webkit-text-stroke:0.60px currentColor">各</b><b class="c" style="width:12px;font-size:14.0px;-webkit-text-stroke:0.60px currentColor">項</b><b class="c" style="width:12px;font-size:14.0px;-webkit-text-stroke:0.60px currentColor">資</b><b class="c" style="width:12px;font-size:14.0px;-webkit-text-stroke:0.60px currentColor">料</b><b class="c" style="width:12px;font-size:14.0px;-webkit-text-stroke:0.60px currentColor">設</b><b class="c" style="width:12px;font-size:14.0px;-webkit-text-stroke:0.60px currentColor">定</b></div>
<div style="left:50px;top:221px;width:11px;height:1px;background:repeating-linear-gradient(90deg,#A0A0A0 0 1px,transparent 1px 2px)"></div>
<svg style="left:62px;top:216px" width="13" height="11"><rect x="0.5" y="0.5" width="11" height="10" fill="#fff" stroke="#000"/><rect x="0.5" y="0" width="11" height="2" fill="#1030E0"/><rect x="6" y="3" width="4" height="4" fill="#20C020" stroke="#000" stroke-width="0.6"/><path d="M2 8.5h3" stroke="#E00000"/></svg>
<div class="t" style="left:80px;top:215px;color:#000;line-height:13px;"><b class="a" style="font-size:10.00px;letter-spacing:0.00px">4 </b><b class="c" style="width:12px;font-size:14.0px;-webkit-text-stroke:0.60px currentColor">生</b><b class="c" style="width:12px;font-size:14.0px;-webkit-text-stroke:0.60px currentColor">產</b><b class="c" style="width:12px;font-size:14.0px;-webkit-text-stroke:0.60px currentColor">規</b><b class="c" style="width:12px;font-size:14.0px;-webkit-text-stroke:0.60px currentColor">格</b><b class="c" style="width:12px;font-size:14.0px;-webkit-text-stroke:0.60px currentColor">設</b><b class="c" style="width:12px;font-size:14.0px;-webkit-text-stroke:0.60px currentColor">定</b><b class="c" style="width:12px;font-size:14.0px;-webkit-text-stroke:0.60px currentColor">頁</b></div>
<div style="left:50px;top:237px;width:11px;height:1px;background:repeating-linear-gradient(90deg,#A0A0A0 0 1px,transparent 1px 2px)"></div>
<svg style="left:62px;top:232px" width="13" height="11"><rect x="0.5" y="0.5" width="11" height="10" fill="#fff" stroke="#000"/><rect x="0.5" y="0" width="11" height="2" fill="#1030E0"/><rect x="6" y="3" width="4" height="4" fill="#20C020" stroke="#000" stroke-width="0.6"/><path d="M2 8.5h3" stroke="#E00000"/></svg>
<div class="t" style="left:80px;top:231px;color:#000;line-height:13px;"><b class="a" style="font-size:10.00px;letter-spacing:0.00px">5 </b><b class="c" style="width:12px;font-size:14.0px;-webkit-text-stroke:0.60px currentColor">生</b><b class="c" style="width:12px;font-size:14.0px;-webkit-text-stroke:0.60px currentColor">產</b><b class="c" style="width:12px;font-size:14.0px;-webkit-text-stroke:0.60px currentColor">步</b><b class="c" style="width:12px;font-size:14.0px;-webkit-text-stroke:0.60px currentColor">驟</b><b class="c" style="width:12px;font-size:14.0px;-webkit-text-stroke:0.60px currentColor">設</b><b class="c" style="width:12px;font-size:14.0px;-webkit-text-stroke:0.60px currentColor">定</b><b class="a" style="font-size:10.00px;letter-spacing:0.00px">-OH</b></div>
<div style="left:50px;top:253px;width:11px;height:1px;background:repeating-linear-gradient(90deg,#A0A0A0 0 1px,transparent 1px 2px)"></div>
<svg style="left:62px;top:248px" width="13" height="11"><rect x="0.5" y="0.5" width="11" height="10" fill="#fff" stroke="#000"/><rect x="0.5" y="0" width="11" height="2" fill="#1030E0"/><rect x="6" y="3" width="4" height="4" fill="#20C020" stroke="#000" stroke-width="0.6"/><path d="M2 8.5h3" stroke="#E00000"/></svg>
<div class="t" style="left:80px;top:247px;color:#000;line-height:13px;"><b class="a" style="font-size:10.00px;letter-spacing:0.00px">6 </b><b class="c" style="width:12px;font-size:14.0px;-webkit-text-stroke:0.60px currentColor">生</b><b class="c" style="width:12px;font-size:14.0px;-webkit-text-stroke:0.60px currentColor">產</b><b class="c" style="width:12px;font-size:14.0px;-webkit-text-stroke:0.60px currentColor">時</b><b class="c" style="width:12px;font-size:14.0px;-webkit-text-stroke:0.60px currentColor">間</b><b class="c" style="width:12px;font-size:14.0px;-webkit-text-stroke:0.60px currentColor">設</b><b class="c" style="width:12px;font-size:14.0px;-webkit-text-stroke:0.60px currentColor">定</b><b class="a" style="font-size:10.00px;letter-spacing:0.00px">-OH</b></div>
<div style="left:50px;top:269px;width:11px;height:1px;background:repeating-linear-gradient(90deg,#A0A0A0 0 1px,transparent 1px 2px)"></div>
<svg style="left:62px;top:264px" width="13" height="11"><rect x="0.5" y="0.5" width="11" height="10" fill="#fff" stroke="#000"/><rect x="0.5" y="0" width="11" height="2" fill="#1030E0"/><rect x="6" y="3" width="4" height="4" fill="#20C020" stroke="#000" stroke-width="0.6"/><path d="M2 8.5h3" stroke="#E00000"/></svg>
<div class="t" style="left:80px;top:263px;color:#000;line-height:13px;"><b class="a" style="font-size:10.00px;letter-spacing:0.00px">7 </b><b class="c" style="width:12px;font-size:14.0px;-webkit-text-stroke:0.60px currentColor">日</b><b class="c" style="width:12px;font-size:14.0px;-webkit-text-stroke:0.60px currentColor">期</b><b class="c" style="width:12px;font-size:14.0px;-webkit-text-stroke:0.60px currentColor">時</b><b class="c" style="width:12px;font-size:14.0px;-webkit-text-stroke:0.60px currentColor">間</b><b class="c" style="width:12px;font-size:14.0px;-webkit-text-stroke:0.60px currentColor">規</b><b class="c" style="width:12px;font-size:14.0px;-webkit-text-stroke:0.60px currentColor">格</b><b class="c" style="width:12px;font-size:14.0px;-webkit-text-stroke:0.60px currentColor">步</b><b class="c" style="width:12px;font-size:14.0px;-webkit-text-stroke:0.60px currentColor">驟</b><b class="c" style="width:12px;font-size:14.0px;-webkit-text-stroke:0.60px currentColor">顯</b><b class="c" style="width:12px;font-size:14.0px;-webkit-text-stroke:0.60px currentColor">示</b></div>
<div style="left:50px;top:285px;width:11px;height:1px;background:repeating-linear-gradient(90deg,#A0A0A0 0 1px,transparent 1px 2px)"></div>
<svg style="left:62px;top:280px" width="13" height="11"><rect x="0.5" y="0.5" width="11" height="10" fill="#fff" stroke="#000"/><rect x="0.5" y="0" width="11" height="2" fill="#1030E0"/><rect x="6" y="3" width="4" height="4" fill="#20C020" stroke="#000" stroke-width="0.6"/><path d="M2 8.5h3" stroke="#E00000"/></svg>
<div class="t" style="left:80px;top:279px;color:#000;line-height:13px;"><b class="a" style="font-size:10.00px;letter-spacing:0.00px">8 </b><b class="c" style="width:12px;font-size:14.0px;-webkit-text-stroke:0.60px currentColor">生</b><b class="c" style="width:12px;font-size:14.0px;-webkit-text-stroke:0.60px currentColor">產</b><b class="c" style="width:12px;font-size:14.0px;-webkit-text-stroke:0.60px currentColor">條</b><b class="c" style="width:12px;font-size:14.0px;-webkit-text-stroke:0.60px currentColor">數</b><b class="c" style="width:12px;font-size:14.0px;-webkit-text-stroke:0.60px currentColor">計</b><b class="c" style="width:12px;font-size:14.0px;-webkit-text-stroke:0.60px currentColor">數</b><b class="c" style="width:12px;font-size:14.0px;-webkit-text-stroke:0.60px currentColor">顯</b><b class="c" style="width:12px;font-size:14.0px;-webkit-text-stroke:0.60px currentColor">示</b></div>
<div style="left:50px;top:301px;width:11px;height:1px;background:repeating-linear-gradient(90deg,#A0A0A0 0 1px,transparent 1px 2px)"></div>
<svg style="left:62px;top:296px" width="13" height="11"><rect x="0.5" y="0.5" width="11" height="10" fill="#fff" stroke="#000"/><rect x="0.5" y="0" width="11" height="2" fill="#1030E0"/><rect x="6" y="3" width="4" height="4" fill="#20C020" stroke="#000" stroke-width="0.6"/><path d="M2 8.5h3" stroke="#E00000"/></svg>
<div class="t" style="left:80px;top:295px;color:#000;line-height:13px;"><b class="a" style="font-size:10.00px;letter-spacing:0.00px">9 </b><b class="c" style="width:12px;font-size:14.0px;-webkit-text-stroke:0.60px currentColor">各</b><b class="c" style="width:12px;font-size:14.0px;-webkit-text-stroke:0.60px currentColor">項</b><b class="c" style="width:12px;font-size:14.0px;-webkit-text-stroke:0.60px currentColor">資</b><b class="c" style="width:12px;font-size:14.0px;-webkit-text-stroke:0.60px currentColor">料</b><b class="c" style="width:12px;font-size:14.0px;-webkit-text-stroke:0.60px currentColor">顯</b><b class="c" style="width:12px;font-size:14.0px;-webkit-text-stroke:0.60px currentColor">示</b><b class="c" style="width:12px;font-size:14.0px;-webkit-text-stroke:0.60px currentColor">頁</b></div>
<div style="left:50px;top:317px;width:11px;height:1px;background:repeating-linear-gradient(90deg,#A0A0A0 0 1px,transparent 1px 2px)"></div>
<svg style="left:62px;top:312px" width="13" height="11"><rect x="0.5" y="0.5" width="11" height="10" fill="#fff" stroke="#000"/><rect x="0.5" y="0" width="11" height="2" fill="#1030E0"/><rect x="6" y="3" width="4" height="4" fill="#20C020" stroke="#000" stroke-width="0.6"/><path d="M2 8.5h3" stroke="#E00000"/></svg>
<div class="t" style="left:80px;top:311px;color:#000;line-height:13px;"><b class="a" style="font-size:10.00px;letter-spacing:0.00px">10 </b><b class="c" style="width:12px;font-size:14.0px;-webkit-text-stroke:0.60px currentColor">生</b><b class="c" style="width:12px;font-size:14.0px;-webkit-text-stroke:0.60px currentColor">產</b><b class="c" style="width:12px;font-size:14.0px;-webkit-text-stroke:0.60px currentColor">步</b><b class="c" style="width:12px;font-size:14.0px;-webkit-text-stroke:0.60px currentColor">驟</b><b class="c" style="width:12px;font-size:14.0px;-webkit-text-stroke:0.60px currentColor">選</b><b class="c" style="width:12px;font-size:14.0px;-webkit-text-stroke:0.60px currentColor">擇</b><b class="a" style="font-size:10.00px;letter-spacing:0.00px">-OH</b></div>
<div style="left:50px;top:333px;width:11px;height:1px;background:repeating-linear-gradient(90deg,#A0A0A0 0 1px,transparent 1px 2px)"></div>
<svg style="left:62px;top:328px" width="13" height="11"><rect x="0.5" y="0.5" width="11" height="10" fill="#fff" stroke="#000"/><rect x="0.5" y="0" width="11" height="2" fill="#1030E0"/><rect x="6" y="3" width="4" height="4" fill="#20C020" stroke="#000" stroke-width="0.6"/><path d="M2 8.5h3" stroke="#E00000"/></svg>
<div class="t" style="left:80px;top:327px;color:#000;line-height:13px;"><b class="a" style="font-size:10.00px;letter-spacing:0.00px">11 </b><b class="c" style="width:12px;font-size:14.0px;-webkit-text-stroke:0.60px currentColor">機</b><b class="c" style="width:12px;font-size:14.0px;-webkit-text-stroke:0.60px currentColor">台</b><b class="c" style="width:12px;font-size:14.0px;-webkit-text-stroke:0.60px currentColor">異</b><b class="c" style="width:12px;font-size:14.0px;-webkit-text-stroke:0.60px currentColor">常</b><b class="c" style="width:12px;font-size:14.0px;-webkit-text-stroke:0.60px currentColor">顯</b><b class="c" style="width:12px;font-size:14.0px;-webkit-text-stroke:0.60px currentColor">示</b><b class="a" style="font-size:10.00px;letter-spacing:0.00px">[</b><b class="c" style="width:12px;font-size:14.0px;-webkit-text-stroke:0.60px currentColor">自</b><b class="c" style="width:12px;font-size:14.0px;-webkit-text-stroke:0.60px currentColor">動</b><b class="a" style="font-size:10.00px;letter-spacing:0.00px">]</b></div>
<div style="left:50px;top:349px;width:11px;height:1px;background:repeating-linear-gradient(90deg,#A0A0A0 0 1px,transparent 1px 2px)"></div>
<svg style="left:62px;top:344px" width="13" height="11"><rect x="0.5" y="0.5" width="11" height="10" fill="#fff" stroke="#000"/><rect x="0.5" y="0" width="11" height="2" fill="#1030E0"/><rect x="6" y="3" width="4" height="4" fill="#20C020" stroke="#000" stroke-width="0.6"/><path d="M2 8.5h3" stroke="#E00000"/></svg>
<div class="t" style="left:80px;top:343px;color:#000;line-height:13px;"><b class="a" style="font-size:10.00px;letter-spacing:0.00px">12 </b><b class="c" style="width:12px;font-size:14.0px;-webkit-text-stroke:0.60px currentColor">生</b><b class="c" style="width:12px;font-size:14.0px;-webkit-text-stroke:0.60px currentColor">產</b><b class="c" style="width:12px;font-size:14.0px;-webkit-text-stroke:0.60px currentColor">步</b><b class="c" style="width:12px;font-size:14.0px;-webkit-text-stroke:0.60px currentColor">驟</b><b class="c" style="width:12px;font-size:14.0px;-webkit-text-stroke:0.60px currentColor">設</b><b class="c" style="width:12px;font-size:14.0px;-webkit-text-stroke:0.60px currentColor">定</b><b class="a" style="font-size:10.00px;letter-spacing:0.00px">-2ND</b></div>
<div style="left:50px;top:365px;width:11px;height:1px;background:repeating-linear-gradient(90deg,#A0A0A0 0 1px,transparent 1px 2px)"></div>
<svg style="left:62px;top:360px" width="13" height="11"><rect x="0.5" y="0.5" width="11" height="10" fill="#fff" stroke="#000"/><rect x="0.5" y="0" width="11" height="2" fill="#1030E0"/><rect x="6" y="3" width="4" height="4" fill="#20C020" stroke="#000" stroke-width="0.6"/><path d="M2 8.5h3" stroke="#E00000"/></svg>
<div class="t" style="left:80px;top:359px;color:#000;line-height:13px;"><b class="a" style="font-size:10.00px;letter-spacing:0.00px">13 </b><b class="c" style="width:12px;font-size:14.0px;-webkit-text-stroke:0.60px currentColor">生</b><b class="c" style="width:12px;font-size:14.0px;-webkit-text-stroke:0.60px currentColor">產</b><b class="c" style="width:12px;font-size:14.0px;-webkit-text-stroke:0.60px currentColor">時</b><b class="c" style="width:12px;font-size:14.0px;-webkit-text-stroke:0.60px currentColor">間</b><b class="c" style="width:12px;font-size:14.0px;-webkit-text-stroke:0.60px currentColor">設</b><b class="c" style="width:12px;font-size:14.0px;-webkit-text-stroke:0.60px currentColor">定</b><b class="a" style="font-size:10.00px;letter-spacing:0.00px">-2ND</b></div>
<div style="left:50px;top:381px;width:11px;height:1px;background:repeating-linear-gradient(90deg,#A0A0A0 0 1px,transparent 1px 2px)"></div>
<svg style="left:62px;top:376px" width="13" height="11"><rect x="0.5" y="0.5" width="11" height="10" fill="#fff" stroke="#000"/><rect x="0.5" y="0" width="11" height="2" fill="#1030E0"/><rect x="6" y="3" width="4" height="4" fill="#20C020" stroke="#000" stroke-width="0.6"/><path d="M2 8.5h3" stroke="#E00000"/></svg>
<div class="t" style="left:80px;top:375px;color:#000;line-height:13px;"><b class="a" style="font-size:10.00px;letter-spacing:0.00px">14 </b><b class="c" style="width:12px;font-size:14.0px;-webkit-text-stroke:0.60px currentColor">生</b><b class="c" style="width:12px;font-size:14.0px;-webkit-text-stroke:0.60px currentColor">產</b><b class="c" style="width:12px;font-size:14.0px;-webkit-text-stroke:0.60px currentColor">步</b><b class="c" style="width:12px;font-size:14.0px;-webkit-text-stroke:0.60px currentColor">驟</b><b class="c" style="width:12px;font-size:14.0px;-webkit-text-stroke:0.60px currentColor">選</b><b class="c" style="width:12px;font-size:14.0px;-webkit-text-stroke:0.60px currentColor">擇</b><b class="a" style="font-size:10.00px;letter-spacing:0.00px">-2ND</b></div>
<div style="left:50px;top:397px;width:11px;height:1px;background:repeating-linear-gradient(90deg,#A0A0A0 0 1px,transparent 1px 2px)"></div>
<svg style="left:62px;top:392px" width="13" height="11"><rect x="0.5" y="0.5" width="11" height="10" fill="#fff" stroke="#000"/><rect x="0.5" y="0" width="11" height="2" fill="#1030E0"/><rect x="6" y="3" width="4" height="4" fill="#20C020" stroke="#000" stroke-width="0.6"/><path d="M2 8.5h3" stroke="#E00000"/></svg>
<div class="t" style="left:80px;top:391px;color:#000;line-height:13px;"><b class="a" style="font-size:10.00px;letter-spacing:0.00px">15 OH-2ND</b><b class="c" style="width:12px;font-size:14.0px;-webkit-text-stroke:0.60px currentColor">機</b><b class="c" style="width:12px;font-size:14.0px;-webkit-text-stroke:0.60px currentColor">構</b><b class="c" style="width:12px;font-size:14.0px;-webkit-text-stroke:0.60px currentColor">切</b><b class="c" style="width:12px;font-size:14.0px;-webkit-text-stroke:0.60px currentColor">換</b></div>
<div style="left:50px;top:413px;width:11px;height:1px;background:repeating-linear-gradient(90deg,#A0A0A0 0 1px,transparent 1px 2px)"></div>
<svg style="left:62px;top:408px" width="13" height="11"><rect x="0.5" y="0.5" width="11" height="10" fill="#fff" stroke="#000"/><rect x="0.5" y="0" width="11" height="2" fill="#1030E0"/><rect x="6" y="3" width="4" height="4" fill="#20C020" stroke="#000" stroke-width="0.6"/><path d="M2 8.5h3" stroke="#E00000"/></svg>
<div class="t" style="left:80px;top:407px;color:#000;line-height:13px;"><b class="a" style="font-size:10.00px;letter-spacing:0.00px">16 </b><b class="c" style="width:12px;font-size:14.0px;-webkit-text-stroke:0.60px currentColor">纏</b><b class="c" style="width:12px;font-size:14.0px;-webkit-text-stroke:0.60px currentColor">繞</b><b class="c" style="width:12px;font-size:14.0px;-webkit-text-stroke:0.60px currentColor">規</b><b class="c" style="width:12px;font-size:14.0px;-webkit-text-stroke:0.60px currentColor">格</b><b class="c" style="width:12px;font-size:14.0px;-webkit-text-stroke:0.60px currentColor">選</b><b class="c" style="width:12px;font-size:14.0px;-webkit-text-stroke:0.60px currentColor">擇</b></div>
<div style="left:50px;top:429px;width:11px;height:1px;background:repeating-linear-gradient(90deg,#A0A0A0 0 1px,transparent 1px 2px)"></div>
<svg style="left:62px;top:424px" width="13" height="11"><rect x="0.5" y="0.5" width="11" height="10" fill="#fff" stroke="#000"/><rect x="0.5" y="0" width="11" height="2" fill="#1030E0"/><rect x="6" y="3" width="4" height="4" fill="#20C020" stroke="#000" stroke-width="0.6"/><path d="M2 8.5h3" stroke="#E00000"/></svg>
<div class="t" style="left:80px;top:423px;color:#000;line-height:13px;"><b class="a" style="font-size:10.00px;letter-spacing:0.00px">17 uu</b></div>
<div style="left:50px;top:445px;width:11px;height:1px;background:repeating-linear-gradient(90deg,#A0A0A0 0 1px,transparent 1px 2px)"></div>
<svg style="left:62px;top:440px" width="13" height="11"><rect x="0.5" y="0.5" width="11" height="10" fill="#fff" stroke="#000"/><rect x="0.5" y="0" width="11" height="2" fill="#1030E0"/><rect x="6" y="3" width="4" height="4" fill="#20C020" stroke="#000" stroke-width="0.6"/><path d="M2 8.5h3" stroke="#E00000"/></svg>
<div class="t" style="left:80px;top:439px;color:#000;line-height:13px;"><b class="a" style="font-size:10.00px;letter-spacing:0.00px">20 </b><b class="c" style="width:12px;font-size:14.0px;-webkit-text-stroke:0.60px currentColor">機</b><b class="c" style="width:12px;font-size:14.0px;-webkit-text-stroke:0.60px currentColor">台</b><b class="c" style="width:12px;font-size:14.0px;-webkit-text-stroke:0.60px currentColor">異</b><b class="c" style="width:12px;font-size:14.0px;-webkit-text-stroke:0.60px currentColor">常</b><b class="c" style="width:12px;font-size:14.0px;-webkit-text-stroke:0.60px currentColor">顯</b><b class="c" style="width:12px;font-size:14.0px;-webkit-text-stroke:0.60px currentColor">示</b><b class="a" style="font-size:10.00px;letter-spacing:0.00px">[</b><b class="c" style="width:12px;font-size:14.0px;-webkit-text-stroke:0.60px currentColor">手</b><b class="c" style="width:12px;font-size:14.0px;-webkit-text-stroke:0.60px currentColor">動</b><b class="a" style="font-size:10.00px;letter-spacing:0.00px">]</b></div>
<div style="left:50px;top:461px;width:11px;height:1px;background:repeating-linear-gradient(90deg,#A0A0A0 0 1px,transparent 1px 2px)"></div>
<svg style="left:62px;top:456px" width="13" height="11"><rect x="0.5" y="0.5" width="11" height="10" fill="#fff" stroke="#000"/><rect x="0.5" y="0" width="11" height="2" fill="#1030E0"/><rect x="6" y="3" width="4" height="4" fill="#20C020" stroke="#000" stroke-width="0.6"/><path d="M2 8.5h3" stroke="#E00000"/></svg>
<div class="t" style="left:80px;top:455px;color:#000;line-height:13px;"><b class="a" style="font-size:10.00px;letter-spacing:0.00px">23 </b><b class="c" style="width:12px;font-size:14.0px;-webkit-text-stroke:0.60px currentColor">胎</b><b class="c" style="width:12px;font-size:14.0px;-webkit-text-stroke:0.60px currentColor">肩</b><b class="c" style="width:12px;font-size:14.0px;-webkit-text-stroke:0.60px currentColor">拉</b><b class="c" style="width:12px;font-size:14.0px;-webkit-text-stroke:0.60px currentColor">伸</b><b class="c" style="width:12px;font-size:14.0px;-webkit-text-stroke:0.60px currentColor">位</b><b class="c" style="width:12px;font-size:14.0px;-webkit-text-stroke:0.60px currentColor">置</b><b class="c" style="width:12px;font-size:14.0px;-webkit-text-stroke:0.60px currentColor">修</b><b class="c" style="width:12px;font-size:14.0px;-webkit-text-stroke:0.60px currentColor">改</b></div>
<div style="left:50px;top:477px;width:11px;height:1px;background:repeating-linear-gradient(90deg,#A0A0A0 0 1px,transparent 1px 2px)"></div>
<svg style="left:62px;top:472px" width="13" height="11"><rect x="0.5" y="0.5" width="11" height="10" fill="#fff" stroke="#000"/><rect x="0.5" y="0" width="11" height="2" fill="#1030E0"/><rect x="6" y="3" width="4" height="4" fill="#20C020" stroke="#000" stroke-width="0.6"/><path d="M2 8.5h3" stroke="#E00000"/></svg>
<div class="t" style="left:80px;top:471px;color:#000;line-height:13px;"><b class="a" style="font-size:10.00px;letter-spacing:0.00px">24</b></div>
<div style="left:50px;top:493px;width:11px;height:1px;background:repeating-linear-gradient(90deg,#A0A0A0 0 1px,transparent 1px 2px)"></div>
<svg style="left:62px;top:488px" width="13" height="11"><rect x="0.5" y="0.5" width="11" height="10" fill="#fff" stroke="#000"/><rect x="0.5" y="0" width="11" height="2" fill="#1030E0"/><rect x="6" y="3" width="4" height="4" fill="#20C020" stroke="#000" stroke-width="0.6"/><path d="M2 8.5h3" stroke="#E00000"/></svg>
<div class="t" style="left:80px;top:487px;color:#000;line-height:13px;"><b class="a" style="font-size:10.00px;letter-spacing:0.00px">25</b></div>
<div style="left:50px;top:509px;width:11px;height:1px;background:repeating-linear-gradient(90deg,#A0A0A0 0 1px,transparent 1px 2px)"></div>
<svg style="left:62px;top:504px" width="13" height="11"><rect x="0.5" y="0.5" width="11" height="10" fill="#fff" stroke="#000"/><rect x="0.5" y="0" width="11" height="2" fill="#1030E0"/><rect x="6" y="3" width="4" height="4" fill="#20C020" stroke="#000" stroke-width="0.6"/><path d="M2 8.5h3" stroke="#E00000"/></svg>
<div class="t" style="left:80px;top:503px;color:#000;line-height:13px;"><b class="a" style="font-size:10.00px;letter-spacing:0.00px">26 </b><b class="c" style="width:12px;font-size:14.0px;-webkit-text-stroke:0.60px currentColor">定</b><b class="c" style="width:12px;font-size:14.0px;-webkit-text-stroke:0.60px currentColor">点</b><b class="c" style="width:12px;font-size:14.0px;-webkit-text-stroke:0.60px currentColor">设</b><b class="c" style="width:12px;font-size:14.0px;-webkit-text-stroke:0.60px currentColor">定</b></div>
<div style="left:228px;top:150px;width:16px;height:368px;background:#F3F1EC"></div>
<div style="left:228px;top:150px;width:16px;height:16px;background:linear-gradient(90deg,#C8D8FA,#B4CAF6);border:1px solid #fff;border-radius:2px"><svg style="left:3px;top:4px" width="9" height="6"><path d="M1 5l3.5-3.5L8 5" fill="none" stroke="#4D6185" stroke-width="2"/></svg></div>
<div style="left:228px;top:173px;width:16px;height:109px;background:linear-gradient(90deg,#CAD9FB,#BACEF8);border:1px solid #fff;border-radius:2px"><div style="left:4px;top:50px;width:7px;height:7px;background:repeating-linear-gradient(#fff 0 1px,#8CA8E6 1px 2px)"></div></div>
<div style="left:228px;top:501px;width:16px;height:16px;background:linear-gradient(90deg,#C8D8FA,#B4CAF6);border:1px solid #fff;border-radius:2px"><svg style="left:3px;top:5px" width="9" height="6"><path d="M1 1l3.5 3.5L8 1" fill="none" stroke="#4D6185" stroke-width="2"/></svg></div>
<div style="left:3px;top:519px;width:225px;height:17px;background:#F3F1EC"></div>
<div style="left:228px;top:518px;width:16px;height:18px;background:#ECE9D8"></div>
<div style="left:4px;top:520px;width:15px;height:15px;background:linear-gradient(#C8D8FA,#B4CAF6);border:1px solid #fff;border-radius:2px"><svg style="left:4px;top:3px" width="6" height="9"><path d="M5 1L1.5 4.5L5 8" fill="none" stroke="#4D6185" stroke-width="2"/></svg></div>
<div style="left:21px;top:520px;width:178px;height:15px;background:linear-gradient(#CAD9FB,#BACEF8);border:1px solid #fff;border-radius:2px"><div style="left:85px;top:4px;width:7px;height:6px;background:repeating-linear-gradient(90deg,#fff 0 1px,#8CA8E6 1px 2px)"></div></div>
<div style="left:210px;top:520px;width:16px;height:15px;background:linear-gradient(#C8D8FA,#B4CAF6);border:1px solid #fff;border-radius:2px"><svg style="left:5px;top:3px" width="6" height="9"><path d="M1 1l3.5 3.5L1 8" fill="none" stroke="#4D6185" stroke-width="2"/></svg></div>
<div style="left:0px;top:558px;width:59px;height:2px;background:#716F64"></div>
<div style="left:59px;top:539px;width:56px;height:19px;border-top:1px solid #fff;border-left:1px solid #fff;border-right:2px solid #716F64;border-bottom:2px solid #716F64;border-radius:2px"></div>
<div style="left:117px;top:539px;width:46px;height:19px;border-top:1px solid #fff;border-left:1px solid #fff;border-right:2px solid #716F64;border-bottom:2px solid #716F64;border-radius:2px"></div>
<svg style="left:6px;top:543px" width="16" height="16"><rect x="3.5" y="1.5" width="11" height="9" fill="#fff" stroke="#000"/><rect x="3" y="1" width="12" height="2" fill="#10208A"/><rect x="10" y="4" width="3" height="3" fill="#C00000"/><rect x="1.5" y="7.5" width="7" height="8" fill="#fff" stroke="#000"/><path d="M2 10.5h6M2 12.5h6M2 14.5h6" stroke="#10208A"/></svg>
<div class="t" style="left:28px;top:544px;color:#000;line-height:13px;"><b class="c" style="width:12px;font-size:14.0px;-webkit-text-stroke:0.60px currentColor">工</b><b class="c" style="width:12px;font-size:14.0px;-webkit-text-stroke:0.60px currentColor">程</b></div>
<svg style="left:64px;top:541px" width="16" height="16"><path d="M1.5 1.5h10l3 3v11h-13z" fill="#fff" stroke="#000"/><path d="M11.5 1.5v3h3" fill="none" stroke="#000"/><path d="M4 6.5h8M4 8.5h8M4 10.5h8M4 12.5h8" stroke="#000"/></svg>
<div class="t" style="left:86px;top:543px;color:#000;line-height:13px;"><b class="c" style="width:12px;font-size:14.0px;-webkit-text-stroke:0.60px currentColor">分</b><b class="c" style="width:12px;font-size:14.0px;-webkit-text-stroke:0.60px currentColor">类</b></div>
<svg style="left:122px;top:541px" width="16" height="16"><path d="M2 14l9-9" stroke="#000" stroke-width="2"/><path d="M2 14l4-4" stroke="#C00000" stroke-width="2"/><path d="M5 3l9 10" stroke="#000" stroke-width="2"/><path d="M8 1l5 0l2 3l-3 2z" fill="#8A7A20" stroke="#000" stroke-width="0.8"/><path d="M1 3l3-2l2 2l-3 3z" fill="#000"/></svg>
<div class="t" style="left:143px;top:543px;color:#000;line-height:13px;"><b class="c" style="width:12px;font-size:14.0px;-webkit-text-stroke:0.60px currentColor">库</b></div>
<div style="left:0px;top:563px;width:253px;height:1px;background:#ACA899"></div>
<div style="left:0px;top:564px;width:253px;height:3px;background:#fff"></div>
<div style="left:0px;top:569px;width:253px;height:2px;background:#000"></div>
<div style="left:3px;top:581px;width:214px;height:1px;background:#fff"></div><div style="left:3px;top:582px;width:214px;height:1px;background:#ACA899"></div><div style="left:3px;top:584px;width:214px;height:1px;background:#fff"></div><div style="left:3px;top:585px;width:214px;height:1px;background:#ACA899"></div><div style="left:221px;top:578px;width:11px;height:11px;background:#ECE9D8;border-top:1px solid #fff;border-left:1px solid #fff;border-right:1px solid #716F64;border-bottom:1px solid #716F64"></div><div style="left:223px;top:580px;width:6px;height:6px;border:1px solid #000;border-top-width:2px"></div><div style="left:234px;top:578px;width:11px;height:11px;background:#ECE9D8;border-top:1px solid #fff;border-left:1px solid #fff;border-right:1px solid #716F64;border-bottom:1px solid #716F64"></div><svg style="left:234px;top:578px" width="11" height="11"><path d="M2.5 2.5l5 5M7.5 2.5l-5 5" stroke="#000" stroke-width="1.8"/></svg>
<div class="t" style="left:0px;top:591px;color:#000;line-height:13px;"><b class="c" style="width:12px;font-size:14.0px;-webkit-text-stroke:0.60px currentColor">画</b><b class="c" style="width:12px;font-size:14.0px;-webkit-text-stroke:0.60px currentColor">面</b></div>
<div style="left:1px;top:622px;width:248px;height:166px;background:#fff;border-top:1px solid #ACA899"></div>
<div style="left:1px;top:623px;width:248px;height:19px;background:#ECE9D8;border-bottom:1px solid #000"></div>
<div style="left:125px;top:623px;width:1px;height:19px;background:#000"></div>
<div class="t" style="left:3px;top:625px;color:#000;line-height:13px;"><b class="c" style="width:12px;font-size:14.0px;-webkit-text-stroke:0.60px currentColor">属</b><b class="c" style="width:12px;font-size:14.0px;-webkit-text-stroke:0.60px currentColor">性</b></div>
<div class="t" style="left:129px;top:625px;color:#000;line-height:13px;"><b class="c" style="width:12px;font-size:14.0px;-webkit-text-stroke:0.60px currentColor">值</b></div>
<div style="left:1px;top:643px;width:124px;height:19px;background:#000080"></div>
<div class="t" style="left:3px;top:645px;color:#fff;line-height:13px;"><b class="c" style="width:12px;font-size:14.0px;-webkit-text-stroke:0.60px currentColor">画</b><b class="c" style="width:12px;font-size:14.0px;-webkit-text-stroke:0.60px currentColor">面</b><b class="c" style="width:12px;font-size:14.0px;-webkit-text-stroke:0.60px currentColor">编</b><b class="c" style="width:12px;font-size:14.0px;-webkit-text-stroke:0.60px currentColor">号</b></div>
<div style="left:1px;top:662px;width:248px;height:1px;background:#ACA899"></div>
<div style="left:125px;top:643px;width:1px;height:20px;background:#ACA899"></div>
<div class="t" style="left:129px;top:645px;color:#000;line-height:13px;"><b class="a" style="font-size:10.00px;letter-spacing:0.00px">1</b></div>
<div style="left:1px;top:663px;width:124px;height:19px;background:#FFFFE1"></div>
<div class="t" style="left:3px;top:665px;color:#000;line-height:13px;"><b class="c" style="width:12px;font-size:14.0px;-webkit-text-stroke:0.60px currentColor">画</b><b class="c" style="width:12px;font-size:14.0px;-webkit-text-stroke:0.60px currentColor">面</b><b class="c" style="width:12px;font-size:14.0px;-webkit-text-stroke:0.60px currentColor">标</b><b class="c" style="width:12px;font-size:14.0px;-webkit-text-stroke:0.60px currentColor">题</b></div>
<div style="left:1px;top:682px;width:248px;height:1px;background:#ACA899"></div>
<div style="left:125px;top:663px;width:1px;height:20px;background:#ACA899"></div>
<div class="t" style="left:129px;top:665px;color:#000;line-height:13px;"><b class="c" style="width:12px;font-size:14.0px;-webkit-text-stroke:0.60px currentColor">主</b><b class="c" style="width:12px;font-size:14.0px;-webkit-text-stroke:0.60px currentColor">畫</b><b class="c" style="width:12px;font-size:14.0px;-webkit-text-stroke:0.60px currentColor">面</b></div>
<div style="left:1px;top:683px;width:124px;height:19px;background:#FFFFE1"></div>
<div class="t" style="left:3px;top:685px;color:#000;line-height:13px;"><b class="c" style="width:12px;font-size:14.0px;-webkit-text-stroke:0.60px currentColor">画</b><b class="c" style="width:12px;font-size:14.0px;-webkit-text-stroke:0.60px currentColor">面</b><b class="c" style="width:12px;font-size:14.0px;-webkit-text-stroke:0.60px currentColor">的</b><b class="c" style="width:12px;font-size:14.0px;-webkit-text-stroke:0.60px currentColor">种</b><b class="c" style="width:12px;font-size:14.0px;-webkit-text-stroke:0.60px currentColor">类</b></div>
<div style="left:1px;top:702px;width:248px;height:1px;background:#ACA899"></div>
<div style="left:125px;top:683px;width:1px;height:20px;background:#ACA899"></div>
<div style="left:127px;top:684px;width:122px;height:18px;background:#C0C0C0"></div>
<div class="t" style="left:129px;top:685px;color:#000;line-height:13px;"><b class="c" style="width:12px;font-size:14.0px;-webkit-text-stroke:0.60px currentColor">基</b><b class="c" style="width:12px;font-size:14.0px;-webkit-text-stroke:0.60px currentColor">本</b><b class="c" style="width:12px;font-size:14.0px;-webkit-text-stroke:0.60px currentColor">画</b><b class="c" style="width:12px;font-size:14.0px;-webkit-text-stroke:0.60px currentColor">面</b></div>
<div style="left:1px;top:703px;width:124px;height:19px;background:#FFFFE1"></div>
<div class="t" style="left:3px;top:705px;color:#000;line-height:13px;"><b class="c" style="width:12px;font-size:14.0px;-webkit-text-stroke:0.60px currentColor">安</b><b class="c" style="width:12px;font-size:14.0px;-webkit-text-stroke:0.60px currentColor">全</b><b class="c" style="width:12px;font-size:14.0px;-webkit-text-stroke:0.60px currentColor">等</b><b class="c" style="width:12px;font-size:14.0px;-webkit-text-stroke:0.60px currentColor">级</b></div>
<div style="left:1px;top:722px;width:248px;height:1px;background:#ACA899"></div>
<div style="left:125px;top:703px;width:1px;height:20px;background:#ACA899"></div>
<div class="t" style="left:129px;top:705px;color:#000;line-height:13px;"><b class="a" style="font-size:10.00px;letter-spacing:0.00px">0</b></div>
<div style="left:1px;top:723px;width:124px;height:19px;background:#FFFFE1"></div>
<div class="t" style="left:3px;top:725px;color:#000;line-height:13px;"><b class="c" style="width:12px;font-size:14.0px;-webkit-text-stroke:0.60px currentColor">详</b><b class="c" style="width:12px;font-size:14.0px;-webkit-text-stroke:0.60px currentColor">细</b><b class="c" style="width:12px;font-size:14.0px;-webkit-text-stroke:0.60px currentColor">说</b><b class="c" style="width:12px;font-size:14.0px;-webkit-text-stroke:0.60px currentColor">明</b></div>
<div style="left:1px;top:742px;width:248px;height:1px;background:#ACA899"></div>
<div style="left:125px;top:723px;width:1px;height:20px;background:#ACA899"></div>
<div style="left:1px;top:743px;width:124px;height:19px;background:#FFFFE1"></div>
<div class="t" style="left:3px;top:745px;color:#000;line-height:13px;"><b class="c" style="width:12px;font-size:14.0px;-webkit-text-stroke:0.60px currentColor">设</b><b class="c" style="width:12px;font-size:14.0px;-webkit-text-stroke:0.60px currentColor">置</b><b class="c" style="width:12px;font-size:14.0px;-webkit-text-stroke:0.60px currentColor">画</b><b class="c" style="width:12px;font-size:14.0px;-webkit-text-stroke:0.60px currentColor">面</b><b class="c" style="width:12px;font-size:14.0px;-webkit-text-stroke:0.60px currentColor">背</b><b class="c" style="width:12px;font-size:14.0px;-webkit-text-stroke:0.60px currentColor">景</b><b class="c" style="width:12px;font-size:14.0px;-webkit-text-stroke:0.60px currentColor">色</b></div>
<div style="left:1px;top:762px;width:248px;height:1px;background:#ACA899"></div>
<div style="left:125px;top:743px;width:1px;height:20px;background:#ACA899"></div>
<div class="t" style="left:129px;top:745px;color:#000;line-height:13px;"><b class="c" style="width:12px;font-size:14.0px;-webkit-text-stroke:0.60px currentColor">有</b></div>
<div style="left:1px;top:763px;width:124px;height:19px;background:#FFFFE1"></div>
<div class="t" style="left:3px;top:765px;color:#000;line-height:13px;"><b class="c" style="width:12px;font-size:14.0px;-webkit-text-stroke:0.60px currentColor">填</b><b class="c" style="width:12px;font-size:14.0px;-webkit-text-stroke:0.60px currentColor">充</b><b class="c" style="width:12px;font-size:14.0px;-webkit-text-stroke:0.60px currentColor">图</b><b class="c" style="width:12px;font-size:14.0px;-webkit-text-stroke:0.60px currentColor">样</b></div>
<div style="left:1px;top:782px;width:248px;height:1px;background:#ACA899"></div>
<div style="left:125px;top:763px;width:1px;height:20px;background:#ACA899"></div>
<div style="left:1px;top:783px;width:124px;height:19px;background:#FFFFE1"></div>
<div class="t" style="left:3px;top:785px;color:#000;line-height:13px;"><b class="c" style="width:12px;font-size:14.0px;-webkit-text-stroke:0.60px currentColor">图</b><b class="c" style="width:12px;font-size:14.0px;-webkit-text-stroke:0.60px currentColor">样</b><b class="c" style="width:12px;font-size:14.0px;-webkit-text-stroke:0.60px currentColor">前</b><b class="c" style="width:12px;font-size:14.0px;-webkit-text-stroke:0.60px currentColor">景</b><b class="c" style="width:12px;font-size:14.0px;-webkit-text-stroke:0.60px currentColor">色</b></div>
<div style="left:1px;top:802px;width:248px;height:1px;background:#ACA899"></div>
<div style="left:125px;top:783px;width:1px;height:20px;background:#ACA899"></div>
<div style="left:127px;top:764px;width:47px;height:15px;background:#C0C0C0"><div class="t" style="left:18px;top:1px;color:#000;line-height:13px;"><b class="c" style="width:12px;font-size:14.0px;-webkit-text-stroke:0.60px currentColor">无</b></div></div>
<div style="left:127px;top:784px;width:47px;height:10px;background:#000"></div>
<div style="left:261px;top:102px;width:890px;height:686px;background:#808080"></div>
<div style="left:283px;top:122px;width:652px;height:518px;background:#7C8FDF;border-radius:7px 7px 0 0;border:1px solid #6E7FD0"></div><div style="left:284px;top:152px;width:650px;height:487px;border-left:3px solid #8DA0E8;border-right:3px solid #8DA0E8;border-bottom:3px solid #8DA0E8"></div><div class="ina" style="left:283px;top:122px;width:652px;height:30px;border-radius:7px 7px 0 0"></div><div style="left:287px;top:152px;width:644px;height:484px;background:#fff;border-top:2px solid #C4BA98;border-left:2px solid #C4BA98"></div><div class="dots" style="left:289px;top:154px;width:640px;height:480px;overflow:hidden"></div><div style="left:908px;top:128px;width:21px;height:21px;background:radial-gradient(circle at 30% 30%,#C792A2,#B97D8F);border:1px solid #D0D8F4;border-radius:3px"><svg style="left:0;top:0" width="19" height="19"><path d="M5 5l9 9M14 5l-9 9" stroke="#fff" stroke-width="2"/></svg></div><div style="left:885px;top:128px;width:21px;height:21px;background:radial-gradient(circle at 30% 30%,#7E9AEA,#5E80E6);border:1px solid #D0D8F4;border-radius:3px"><div style="left:4px;top:4px;width:11px;height:11px;border:1px solid #fff;border-top-width:3px"></div></div><div style="left:862px;top:128px;width:21px;height:21px;background:radial-gradient(circle at 30% 30%,#7E9AEA,#5E80E6);border:1px solid #D0D8F4;border-radius:3px"><div style="left:4px;top:11px;width:7px;height:3px;background:#fff"></div></div>
<div style="left:323px;top:162px;width:652px;height:518px;background:#7C8FDF;border-radius:7px 7px 0 0;border:1px solid #6E7FD0"></div><div style="left:324px;top:192px;width:650px;height:487px;border-left:3px solid #8DA0E8;border-right:3px solid #8DA0E8;border-bottom:3px solid #8DA0E8"></div><div class="ina" style="left:323px;top:162px;width:652px;height:30px;border-radius:7px 7px 0 0"></div><div style="left:327px;top:192px;width:644px;height:484px;background:#fff;border-top:2px solid #C4BA98;border-left:2px solid #C4BA98"></div><div class="dots" style="left:329px;top:194px;width:640px;height:480px;overflow:hidden"></div><div style="left:948px;top:168px;width:21px;height:21px;background:radial-gradient(circle at 30% 30%,#C792A2,#B97D8F);border:1px solid #D0D8F4;border-radius:3px"><svg style="left:0;top:0" width="19" height="19"><path d="M5 5l9 9M14 5l-9 9" stroke="#fff" stroke-width="2"/></svg></div><div style="left:925px;top:168px;width:21px;height:21px;background:radial-gradient(circle at 30% 30%,#7E9AEA,#5E80E6);border:1px solid #D0D8F4;border-radius:3px"><div style="left:4px;top:4px;width:11px;height:11px;border:1px solid #fff;border-top-width:3px"></div></div><div style="left:902px;top:168px;width:21px;height:21px;background:radial-gradient(circle at 30% 30%,#7E9AEA,#5E80E6);border:1px solid #D0D8F4;border-radius:3px"><div style="left:4px;top:11px;width:7px;height:3px;background:#fff"></div></div>
<div style="left:343px;top:182px;width:652px;height:518px;background:#7C8FDF;border-radius:7px 7px 0 0;border:1px solid #6E7FD0"></div><div style="left:344px;top:212px;width:650px;height:487px;border-left:3px solid #8DA0E8;border-right:3px solid #8DA0E8;border-bottom:3px solid #8DA0E8"></div><div class="ina" style="left:343px;top:182px;width:652px;height:30px;border-radius:7px 7px 0 0"></div><div style="left:347px;top:212px;width:644px;height:484px;background:#fff;border-top:2px solid #C4BA98;border-left:2px solid #C4BA98"></div><div class="dots" style="left:349px;top:214px;width:640px;height:480px;overflow:hidden"></div><div style="left:968px;top:188px;width:21px;height:21px;background:radial-gradient(circle at 30% 30%,#C792A2,#B97D8F);border:1px solid #D0D8F4;border-radius:3px"><svg style="left:0;top:0" width="19" height="19"><path d="M5 5l9 9M14 5l-9 9" stroke="#fff" stroke-width="2"/></svg></div><div style="left:945px;top:188px;width:21px;height:21px;background:radial-gradient(circle at 30% 30%,#7E9AEA,#5E80E6);border:1px solid #D0D8F4;border-radius:3px"><div style="left:4px;top:4px;width:11px;height:11px;border:1px solid #fff;border-top-width:3px"></div></div><div style="left:922px;top:188px;width:21px;height:21px;background:radial-gradient(circle at 30% 30%,#7E9AEA,#5E80E6);border:1px solid #D0D8F4;border-radius:3px"><div style="left:4px;top:11px;width:7px;height:3px;background:#fff"></div></div>
<div style="left:363px;top:202px;width:652px;height:518px;background:#7C8FDF;border-radius:7px 7px 0 0;border:1px solid #6E7FD0"></div><div style="left:364px;top:232px;width:650px;height:487px;border-left:3px solid #8DA0E8;border-right:3px solid #8DA0E8;border-bottom:3px solid #8DA0E8"></div><div class="ina" style="left:363px;top:202px;width:652px;height:30px;border-radius:7px 7px 0 0"></div><div style="left:367px;top:232px;width:644px;height:484px;background:#fff;border-top:2px solid #C4BA98;border-left:2px solid #C4BA98"></div><div class="dots" style="left:369px;top:234px;width:640px;height:480px;overflow:hidden"></div><div style="left:988px;top:208px;width:21px;height:21px;background:radial-gradient(circle at 30% 30%,#C792A2,#B97D8F);border:1px solid #D0D8F4;border-radius:3px"><svg style="left:0;top:0" width="19" height="19"><path d="M5 5l9 9M14 5l-9 9" stroke="#fff" stroke-width="2"/></svg></div><div style="left:965px;top:208px;width:21px;height:21px;background:radial-gradient(circle at 30% 30%,#7E9AEA,#5E80E6);border:1px solid #D0D8F4;border-radius:3px"><div style="left:4px;top:4px;width:11px;height:11px;border:1px solid #fff;border-top-width:3px"></div></div><div style="left:942px;top:208px;width:21px;height:21px;background:radial-gradient(circle at 30% 30%,#7E9AEA,#5E80E6);border:1px solid #D0D8F4;border-radius:3px"><div style="left:4px;top:11px;width:7px;height:3px;background:#fff"></div></div>
<div style="left:383px;top:222px;width:652px;height:518px;background:#7C8FDF;border-radius:7px 7px 0 0;border:1px solid #6E7FD0"></div><div style="left:384px;top:252px;width:650px;height:487px;border-left:3px solid #8DA0E8;border-right:3px solid #8DA0E8;border-bottom:3px solid #8DA0E8"></div><div class="ina" style="left:383px;top:222px;width:652px;height:30px;border-radius:7px 7px 0 0"></div><div style="left:387px;top:252px;width:644px;height:484px;background:#fff;border-top:2px solid #C4BA98;border-left:2px solid #C4BA98"></div><div class="dots" style="left:389px;top:254px;width:640px;height:480px;overflow:hidden"></div><div style="left:1008px;top:228px;width:21px;height:21px;background:radial-gradient(circle at 30% 30%,#C792A2,#B97D8F);border:1px solid #D0D8F4;border-radius:3px"><svg style="left:0;top:0" width="19" height="19"><path d="M5 5l9 9M14 5l-9 9" stroke="#fff" stroke-width="2"/></svg></div><div style="left:985px;top:228px;width:21px;height:21px;background:radial-gradient(circle at 30% 30%,#7E9AEA,#5E80E6);border:1px solid #D0D8F4;border-radius:3px"><div style="left:4px;top:4px;width:11px;height:11px;border:1px solid #fff;border-top-width:3px"></div></div><div style="left:962px;top:228px;width:21px;height:21px;background:radial-gradient(circle at 30% 30%,#7E9AEA,#5E80E6);border:1px solid #D0D8F4;border-radius:3px"><div style="left:4px;top:11px;width:7px;height:3px;background:#fff"></div></div>
<div style="left:403px;top:242px;width:652px;height:518px;background:#7C8FDF;border-radius:7px 7px 0 0;border:1px solid #6E7FD0"></div><div style="left:404px;top:272px;width:650px;height:487px;border-left:3px solid #8DA0E8;border-right:3px solid #8DA0E8;border-bottom:3px solid #8DA0E8"></div><div class="ina" style="left:403px;top:242px;width:652px;height:30px;border-radius:7px 7px 0 0"></div><div style="left:407px;top:272px;width:644px;height:484px;background:#fff;border-top:2px solid #C4BA98;border-left:2px solid #C4BA98"></div><div class="dots" style="left:409px;top:274px;width:640px;height:480px;overflow:hidden"></div><div style="left:1028px;top:248px;width:21px;height:21px;background:radial-gradient(circle at 30% 30%,#C792A2,#B97D8F);border:1px solid #D0D8F4;border-radius:3px"><svg style="left:0;top:0" width="19" height="19"><path d="M5 5l9 9M14 5l-9 9" stroke="#fff" stroke-width="2"/></svg></div><div style="left:1005px;top:248px;width:21px;height:21px;background:radial-gradient(circle at 30% 30%,#7E9AEA,#5E80E6);border:1px solid #D0D8F4;border-radius:3px"><div style="left:4px;top:4px;width:11px;height:11px;border:1px solid #fff;border-top-width:3px"></div></div><div style="left:982px;top:248px;width:21px;height:21px;background:radial-gradient(circle at 30% 30%,#7E9AEA,#5E80E6);border:1px solid #D0D8F4;border-radius:3px"><div style="left:4px;top:11px;width:7px;height:3px;background:#fff"></div></div>
<div style="left:423px;top:262px;width:652px;height:518px;background:#7C8FDF;border-radius:7px 7px 0 0;border:1px solid #6E7FD0"></div><div style="left:424px;top:292px;width:650px;height:487px;border-left:3px solid #8DA0E8;border-right:3px solid #8DA0E8;border-bottom:3px solid #8DA0E8"></div><div class="ina" style="left:423px;top:262px;width:652px;height:30px;border-radius:7px 7px 0 0"></div><div style="left:427px;top:292px;width:644px;height:484px;background:#fff;border-top:2px solid #C4BA98;border-left:2px solid #C4BA98"></div><div class="dots" style="left:429px;top:294px;width:640px;height:480px;overflow:hidden"></div><div style="left:1048px;top:268px;width:21px;height:21px;background:radial-gradient(circle at 30% 30%,#C792A2,#B97D8F);border:1px solid #D0D8F4;border-radius:3px"><svg style="left:0;top:0" width="19" height="19"><path d="M5 5l9 9M14 5l-9 9" stroke="#fff" stroke-width="2"/></svg></div><div style="left:1025px;top:268px;width:21px;height:21px;background:radial-gradient(circle at 30% 30%,#7E9AEA,#5E80E6);border:1px solid #D0D8F4;border-radius:3px"><div style="left:4px;top:4px;width:11px;height:11px;border:1px solid #fff;border-top-width:3px"></div></div><div style="left:1002px;top:268px;width:21px;height:21px;background:radial-gradient(circle at 30% 30%,#7E9AEA,#5E80E6);border:1px solid #D0D8F4;border-radius:3px"><div style="left:4px;top:11px;width:7px;height:3px;background:#fff"></div></div>
<div style="left:443px;top:282px;width:652px;height:518px;background:#7C8FDF;border-radius:7px 7px 0 0;border:1px solid #6E7FD0"></div><div style="left:444px;top:312px;width:650px;height:487px;border-left:3px solid #8DA0E8;border-right:3px solid #8DA0E8;border-bottom:3px solid #8DA0E8"></div><div class="ina" style="left:443px;top:282px;width:652px;height:30px;border-radius:7px 7px 0 0"></div><div style="left:447px;top:312px;width:644px;height:484px;background:#fff;border-top:2px solid #C4BA98;border-left:2px solid #C4BA98"></div><div class="dots" style="left:449px;top:314px;width:640px;height:480px;overflow:hidden"></div><div style="left:1068px;top:288px;width:21px;height:21px;background:radial-gradient(circle at 30% 30%,#C792A2,#B97D8F);border:1px solid #D0D8F4;border-radius:3px"><svg style="left:0;top:0" width="19" height="19"><path d="M5 5l9 9M14 5l-9 9" stroke="#fff" stroke-width="2"/></svg></div><div style="left:1045px;top:288px;width:21px;height:21px;background:radial-gradient(circle at 30% 30%,#7E9AEA,#5E80E6);border:1px solid #D0D8F4;border-radius:3px"><div style="left:4px;top:4px;width:11px;height:11px;border:1px solid #fff;border-top-width:3px"></div></div><div style="left:1022px;top:288px;width:21px;height:21px;background:radial-gradient(circle at 30% 30%,#7E9AEA,#5E80E6);border:1px solid #D0D8F4;border-radius:3px"><div style="left:4px;top:11px;width:7px;height:3px;background:#fff"></div></div>
<div style="left:483px;top:322px;width:652px;height:518px;background:#7C8FDF;border-radius:7px 7px 0 0;border:1px solid #6E7FD0"></div><div style="left:484px;top:352px;width:650px;height:487px;border-left:3px solid #8DA0E8;border-right:3px solid #8DA0E8;border-bottom:3px solid #8DA0E8"></div><div class="ina" style="left:483px;top:322px;width:652px;height:30px;border-radius:7px 7px 0 0"></div><div style="left:487px;top:352px;width:644px;height:484px;background:#fff;border-top:2px solid #C4BA98;border-left:2px solid #C4BA98"></div><div class="dots" style="left:489px;top:354px;width:640px;height:480px;overflow:hidden"></div><div style="left:1108px;top:328px;width:21px;height:21px;background:radial-gradient(circle at 30% 30%,#C792A2,#B97D8F);border:1px solid #D0D8F4;border-radius:3px"><svg style="left:0;top:0" width="19" height="19"><path d="M5 5l9 9M14 5l-9 9" stroke="#fff" stroke-width="2"/></svg></div><div style="left:1085px;top:328px;width:21px;height:21px;background:radial-gradient(circle at 30% 30%,#7E9AEA,#5E80E6);border:1px solid #D0D8F4;border-radius:3px"><div style="left:4px;top:4px;width:11px;height:11px;border:1px solid #fff;border-top-width:3px"></div></div><div style="left:1062px;top:328px;width:21px;height:21px;background:radial-gradient(circle at 30% 30%,#7E9AEA,#5E80E6);border:1px solid #D0D8F4;border-radius:3px"><div style="left:4px;top:11px;width:7px;height:3px;background:#fff"></div></div>
<div style="left:463px;top:302px;width:652px;height:518px;background:#7C8FDF;border-radius:7px 7px 0 0;border:1px solid #6E7FD0"></div><div style="left:464px;top:332px;width:650px;height:487px;border-left:3px solid #8DA0E8;border-right:3px solid #8DA0E8;border-bottom:3px solid #8DA0E8"></div><div class="ina" style="left:463px;top:302px;width:652px;height:30px;border-radius:7px 7px 0 0"></div><div style="left:467px;top:332px;width:644px;height:484px;background:#fff;border-top:2px solid #C4BA98;border-left:2px solid #C4BA98"></div><div class="dots" style="left:469px;top:334px;width:640px;height:480px;overflow:hidden"><div style="left:608px;top:-2px;width:32px;height:12px;border:1px solid #00F000"></div></div><div style="left:1088px;top:308px;width:21px;height:21px;background:radial-gradient(circle at 30% 30%,#C792A2,#B97D8F);border:1px solid #D0D8F4;border-radius:3px"><svg style="left:0;top:0" width="19" height="19"><path d="M5 5l9 9M14 5l-9 9" stroke="#fff" stroke-width="2"/></svg></div><div style="left:1065px;top:308px;width:21px;height:21px;background:radial-gradient(circle at 30% 30%,#7E9AEA,#5E80E6);border:1px solid #D0D8F4;border-radius:3px"><div style="left:4px;top:4px;width:11px;height:11px;border:1px solid #fff;border-top-width:3px"></div></div><div style="left:1042px;top:308px;width:21px;height:21px;background:radial-gradient(circle at 30% 30%,#7E9AEA,#5E80E6);border:1px solid #D0D8F4;border-radius:3px"><div style="left:4px;top:11px;width:7px;height:3px;background:#fff"></div></div>
<div style="left:503px;top:342px;width:652px;height:518px;background:#7C8FDF;border-radius:7px 7px 0 0;border:1px solid #6E7FD0"></div><div style="left:504px;top:372px;width:650px;height:487px;border-left:3px solid #8DA0E8;border-right:3px solid #8DA0E8;border-bottom:3px solid #8DA0E8"></div><div class="ina" style="left:503px;top:342px;width:652px;height:30px;border-radius:7px 7px 0 0"></div><div style="left:507px;top:372px;width:644px;height:484px;background:#fff;border-top:2px solid #C4BA98;border-left:2px solid #C4BA98"></div><div class="dots" style="left:509px;top:374px;width:640px;height:480px;overflow:hidden"><div class="t" style="left:414px;top:32px;color:#fff;line-height:16px"><b class="c" style="width:16px;font-size:18.7px;-webkit-text-stroke:0.80px currentColor">设</b><b class="c" style="width:16px;font-size:18.7px;-webkit-text-stroke:0.80px currentColor">定</b><b class="c" style="width:16px;font-size:18.7px;-webkit-text-stroke:0.80px currentColor">点</b></div><div class="t" style="left:466px;top:35px;color:#fff;font-family:Liberation Mono;font-size:14px;line-height:12px">2</div><div style="left:400px;top:64px;width:97px;height:32px;border:1px solid #00F000;border-right-color:#00F000"><svg style="left:35px;top:6px" width="48" height="21" viewBox="0 0 48 21"><g fill="none" stroke="#fff" stroke-width="3"><path transform="translate(0 0)" d="M8 4l4-3v18M6 19h12"/><path transform="translate(24 0)" d="M3 5l3-4h12l3 4v2l-3 4H8l-5 4v4h18"/></g></svg></div><div class="t" style="left:414px;top:128px;color:#fff;line-height:16px"><b class="c" style="width:16px;font-size:18.7px;-webkit-text-stroke:0.80px currentColor">设</b><b class="c" style="width:16px;font-size:18.7px;-webkit-text-stroke:0.80px currentColor">定</b><b class="c" style="width:16px;font-size:18.7px;-webkit-text-stroke:0.80px currentColor">点</b></div><div class="t" style="left:466px;top:131px;color:#fff;font-family:Liberation Mono;font-size:14px;line-height:12px">4</div><div style="left:400px;top:160px;width:97px;height:32px;border:1px solid #00F000"><svg style="left:35px;top:6px" width="48" height="21" viewBox="0 0 48 21"><g fill="none" stroke="#fff" stroke-width="3"><path transform="translate(0 0)" d="M8 4l4-3v18M6 19h12"/><path transform="translate(24 0)" d="M3 5l3-4h12l3 4v2l-3 4H8l-5 4v4h18"/></g></svg></div><div class="t" style="left:449px;top:224px;color:#fff;line-height:16px;transform:scaleX(2);transform-origin:0 0"><b class="a" style="font-size:14.00px;letter-spacing:-0.40px">H</b><b class="c" style="width:16px;font-size:18.7px;-webkit-text-stroke:0.80px currentColor">主</b><b class="c" style="width:16px;font-size:18.7px;-webkit-text-stroke:0.80px currentColor">轴</b><b class="c" style="width:16px;font-size:18.7px;-webkit-text-stroke:0.80px currentColor">一</b><b class="c" style="width:16px;font-size:18.7px;-webkit-text-stroke:0.80px currentColor">回</b><b class="c" style="width:16px;font-size:18.7px;-webkit-text-stroke:0.80px currentColor">转</b></div><div style="left:464px;top:256px;width:161px;height:33px;border:1px solid #00F000"><svg style="left:3px;top:7px" width="155" height="21" viewBox="0 0 155 21"><g fill="none" stroke="#fff" stroke-width="3"><path transform="translate(0 0)" d="M6 1h12l3 3v12l-3 3H6l-3-3V4z"/><path transform="translate(31 0)" d="M8 4l4-3v18M6 19h12"/><path transform="translate(62 0)" d="M3 5l3-4h12l3 4v2l-3 4H8l-5 4v4h18"/><path transform="translate(93 0)" d="M3 1h15l3 3v3l-3 3H9M18 10l3 3v3l-3 3H3"/><path transform="translate(124 0)" d="M16 19V1L3 13v2h18"/></g></svg></div><div style="left:464px;top:257px;width:32px;height:7px;background:#fff;overflow:hidden"><div class="t" style="left:1px;top:0;line-height:7px;font-family:Liberation Mono;font-size:8px;color:#000;letter-spacing:2.8px">D426</div></div><div style="left:65px;top:286px;width:160px;height:1px;background:#00F000"></div><div style="left:257px;top:286px;width:160px;height:1px;background:#00F000"></div><div style="left:96px;top:320px;width:103px;height:48px;border:1px solid #00F000;border-top:2px solid #fff;border-left:2px solid #fff"></div><div style="left:98px;top:322px;width:100px;height:6px;background:repeating-conic-gradient(#C4C4C4 0 25%,#5A5A5A 0 50%) 0 0/2px 2px"></div><div style="left:98px;top:361px;width:100px;height:6px;background:repeating-conic-gradient(#C4C4C4 0 25%,#5A5A5A 0 50%) 0 0/2px 2px"></div><div style="left:98px;top:328px;width:15px;height:33px;background:repeating-conic-gradient(#C4C4C4 0 25%,#5A5A5A 0 50%) 0 0/2px 2px"></div><div style="left:182px;top:328px;width:16px;height:33px;background:repeating-conic-gradient(#C4C4C4 0 25%,#5A5A5A 0 50%) 0 0/2px 2px"></div><div style="left:113px;top:328px;width:69px;height:33px;border:1px solid #fff;border-width:1px 2px 2px 1px"></div><div class="t" style="left:113px;top:336px;width:69px;text-align:center;color:#fff;line-height:16px"><b class="c" style="width:16px;font-size:18.7px;-webkit-text-stroke:0.80px currentColor">数</b><b class="c" style="width:16px;font-size:18.7px;-webkit-text-stroke:0.80px currentColor">值</b><b class="c" style="width:16px;font-size:18.7px;-webkit-text-stroke:0.80px currentColor">设</b><b class="c" style="width:16px;font-size:18.7px;-webkit-text-stroke:0.80px currentColor">定</b></div><div style="left:200px;top:320px;width:104px;height:48px;border:1px solid #00F000;border-top:2px solid #fff;border-left:2px solid #fff"></div><div style="left:202px;top:322px;width:101px;height:6px;background:repeating-conic-gradient(#C4C4C4 0 25%,#5A5A5A 0 50%) 0 0/2px 2px"></div><div style="left:202px;top:361px;width:101px;height:6px;background:repeating-conic-gradient(#C4C4C4 0 25%,#5A5A5A 0 50%) 0 0/2px 2px"></div><div style="left:202px;top:328px;width:13px;height:33px;background:repeating-conic-gradient(#C4C4C4 0 25%,#5A5A5A 0 50%) 0 0/2px 2px"></div><div style="left:289px;top:328px;width:14px;height:33px;background:repeating-conic-gradient(#C4C4C4 0 25%,#5A5A5A 0 50%) 0 0/2px 2px"></div><div style="left:215px;top:328px;width:74px;height:33px;border:1px solid #fff;border-width:1px 2px 2px 1px"></div><div class="t" style="left:215px;top:336px;width:74px;text-align:center;color:#fff;line-height:16px"><b class="c" style="width:16px;font-size:18.7px;-webkit-text-stroke:0.80px currentColor">上</b><b class="c" style="width:16px;font-size:18.7px;-webkit-text-stroke:0.80px currentColor">頁</b></div><div style="left:305px;top:320px;width:111px;height:48px;border:1px solid #00F000;border-top:2px solid #fff;border-left:2px solid #fff"></div><div style="left:307px;top:322px;width:108px;height:6px;background:repeating-conic-gradient(#C4C4C4 0 25%,#5A5A5A 0 50%) 0 0/2px 2px"></div><div style="left:307px;top:361px;width:108px;height:6px;background:repeating-conic-gradient(#C4C4C4 0 25%,#5A5A5A 0 50%) 0 0/2px 2px"></div><div style="left:307px;top:328px;width:17px;height:33px;background:repeating-conic-gradient(#C4C4C4 0 25%,#5A5A5A 0 50%) 0 0/2px 2px"></div><div style="left:397px;top:328px;width:18px;height:33px;background:repeating-conic-gradient(#C4C4C4 0 25%,#5A5A5A 0 50%) 0 0/2px 2px"></div><div style="left:324px;top:328px;width:73px;height:33px;border:1px solid #fff;border-width:1px 2px 2px 1px"></div><div class="t" style="left:324px;top:336px;width:73px;text-align:center;color:#fff;line-height:16px"><b class="c" style="width:16px;font-size:18.7px;-webkit-text-stroke:0.80px currentColor">至</b><b class="c" style="width:16px;font-size:18.7px;-webkit-text-stroke:0.80px currentColor">主</b><b class="c" style="width:16px;font-size:18.7px;-webkit-text-stroke:0.80px currentColor">畫</b><b class="c" style="width:16px;font-size:18.7px;-webkit-text-stroke:0.80px currentColor">面</b></div><div style="left:417px;top:320px;width:111px;height:48px;border:1px solid #00F000;border-top:2px solid #fff;border-left:2px solid #fff"></div><div style="left:419px;top:322px;width:108px;height:6px;background:repeating-conic-gradient(#C4C4C4 0 25%,#5A5A5A 0 50%) 0 0/2px 2px"></div><div style="left:419px;top:361px;width:108px;height:6px;background:repeating-conic-gradient(#C4C4C4 0 25%,#5A5A5A 0 50%) 0 0/2px 2px"></div><div style="left:419px;top:328px;width:16px;height:33px;background:repeating-conic-gradient(#C4C4C4 0 25%,#5A5A5A 0 50%) 0 0/2px 2px"></div><div style="left:509px;top:328px;width:18px;height:33px;background:repeating-conic-gradient(#C4C4C4 0 25%,#5A5A5A 0 50%) 0 0/2px 2px"></div><div style="left:435px;top:328px;width:74px;height:33px;border:1px solid #fff;border-width:1px 2px 2px 1px"></div><div class="t" style="left:435px;top:336px;width:74px;text-align:center;color:#fff;line-height:16px"><b class="c" style="width:16px;font-size:18.7px;-webkit-text-stroke:0.80px currentColor">下</b><b class="c" style="width:16px;font-size:18.7px;-webkit-text-stroke:0.80px currentColor">頁</b></div><div style="left:112px;top:336px;width:79px;height:17px;border:1px solid #00F000;border-left:none;border-top-style:dashed"></div></div><div style="left:1128px;top:348px;width:21px;height:21px;background:radial-gradient(circle at 30% 30%,#C792A2,#B97D8F);border:1px solid #D0D8F4;border-radius:3px"><svg style="left:0;top:0" width="19" height="19"><path d="M5 5l9 9M14 5l-9 9" stroke="#fff" stroke-width="2"/></svg></div><div style="left:1105px;top:348px;width:21px;height:21px;background:radial-gradient(circle at 30% 30%,#7E9AEA,#5E80E6);border:1px solid #D0D8F4;border-radius:3px"><div style="left:4px;top:4px;width:11px;height:11px;border:1px solid #fff;border-top-width:3px"></div></div><div style="left:1082px;top:348px;width:21px;height:21px;background:radial-gradient(circle at 30% 30%,#7E9AEA,#5E80E6);border:1px solid #D0D8F4;border-radius:3px"><div style="left:4px;top:11px;width:7px;height:3px;background:#fff"></div></div>
<div style="left:303px;top:142px;width:652px;height:518px;background:#7C8FDF;border-radius:7px 7px 0 0;border:1px solid #6E7FD0"></div><div style="left:304px;top:172px;width:650px;height:487px;border-left:3px solid #8DA0E8;border-right:3px solid #8DA0E8;border-bottom:3px solid #8DA0E8"></div><div class="ina" style="left:303px;top:142px;width:652px;height:30px;border-radius:7px 7px 0 0"></div><div style="left:307px;top:172px;width:644px;height:484px;background:#fff;border-top:2px solid #C4BA98;border-left:2px solid #C4BA98"></div><div class="dots" style="left:309px;top:174px;width:640px;height:480px;overflow:hidden"><div class="t" style="left:612px;top:74px;color:#1010F0;font-family:Liberation Mono;font-size:17px;line-height:17px;transform:scaleX(1.3);transform-origin:0 0">m</div><div style="left:610px;top:143px;width:2px;height:6px;background:#F00000"></div><div style="left:124px;top:400px;width:85px;height:60px;border:1px solid #00F000"></div><div style="left:129px;top:405px;width:75px;height:51px;border:1px solid #fff;border-top:none"></div><svg style="left:124px;top:450px" width="85" height="10"><path d="M1 9l5-4M84 9l-5-4" stroke="#fff"/></svg><div style="left:128px;top:463px;width:81px;height:1px;background:repeating-linear-gradient(90deg,#00F000 0 12px,transparent 12px 16px)"></div><div style="left:128px;top:400px;width:1px;height:64px;background:repeating-linear-gradient(#00F000 0 12px,transparent 12px 16px)"></div><div style="left:212px;top:400px;width:85px;height:60px;border:1px solid #00F000"></div><div style="left:217px;top:405px;width:75px;height:51px;border:1px solid #fff;border-top:none"></div><svg style="left:212px;top:450px" width="85" height="10"><path d="M1 9l5-4M84 9l-5-4" stroke="#fff"/></svg><div style="left:216px;top:463px;width:81px;height:1px;background:repeating-linear-gradient(90deg,#00F000 0 12px,transparent 12px 16px)"></div><div style="left:216px;top:400px;width:1px;height:64px;background:repeating-linear-gradient(#00F000 0 12px,transparent 12px 16px)"></div><div style="left:300px;top:400px;width:85px;height:60px;border:1px solid #00F000"></div><div style="left:305px;top:405px;width:75px;height:51px;border:1px solid #fff;border-top:none"></div><svg style="left:300px;top:450px" width="85" height="10"><path d="M1 9l5-4M84 9l-5-4" stroke="#fff"/></svg><div style="left:304px;top:463px;width:81px;height:1px;background:repeating-linear-gradient(90deg,#00F000 0 12px,transparent 12px 16px)"></div><div style="left:304px;top:400px;width:1px;height:64px;background:repeating-linear-gradient(#00F000 0 12px,transparent 12px 16px)"></div><div style="left:388px;top:400px;width:85px;height:60px;border:1px solid #00F000"></div><div style="left:393px;top:405px;width:75px;height:51px;border:1px solid #fff;border-top:none"></div><svg style="left:388px;top:450px" width="85" height="10"><path d="M1 9l5-4M84 9l-5-4" stroke="#fff"/></svg><div style="left:392px;top:463px;width:81px;height:1px;background:repeating-linear-gradient(90deg,#00F000 0 12px,transparent 12px 16px)"></div><div style="left:392px;top:400px;width:1px;height:64px;background:repeating-linear-gradient(#00F000 0 12px,transparent 12px 16px)"></div></div><div style="left:928px;top:148px;width:21px;height:21px;background:radial-gradient(circle at 30% 30%,#C792A2,#B97D8F);border:1px solid #D0D8F4;border-radius:3px"><svg style="left:0;top:0" width="19" height="19"><path d="M5 5l9 9M14 5l-9 9" stroke="#fff" stroke-width="2"/></svg></div><div style="left:905px;top:148px;width:21px;height:21px;background:radial-gradient(circle at 30% 30%,#7E9AEA,#5E80E6);border:1px solid #D0D8F4;border-radius:3px"><div style="left:4px;top:4px;width:11px;height:11px;border:1px solid #fff;border-top-width:3px"></div></div><div style="left:882px;top:148px;width:21px;height:21px;background:radial-gradient(circle at 30% 30%,#7E9AEA,#5E80E6);border:1px solid #D0D8F4;border-radius:3px"><div style="left:4px;top:11px;width:7px;height:3px;background:#fff"></div></div>
<div style="left:267px;top:108px;width:652px;height:518px;background:#0842D8;border-radius:7px 7px 0 0;border:1px solid #0831A8"></div><div style="left:268px;top:138px;width:650px;height:487px;border-left:3px solid #1C66EE;border-right:3px solid #0C4ADA;border-bottom:3px solid #0C4ADA"></div><div class="act" style="left:267px;top:108px;width:652px;height:30px;border-radius:7px 7px 0 0"></div><div style="left:271px;top:138px;width:644px;height:484px;background:#fff;border-top:2px solid #C4BA98;border-left:2px solid #C4BA98"></div><div class="dots" style="left:273px;top:140px;width:640px;height:480px;overflow:hidden"><svg style="left:94px;top:22px" width="82" height="8" viewBox="0 0 82 8"><path d="M0.5 1l5 3l-5 3M80.5 1l-5 3l5 3" fill="none" stroke="#fff" stroke-width="1.6"/><rect x="6" y="0.5" width="4" height="7" fill="#fff"/><rect x="22" y="0.5" width="4" height="7" fill="#fff"/><rect x="38" y="0.5" width="4" height="7" fill="#fff"/><rect x="54" y="0.5" width="4" height="7" fill="#fff"/><rect x="70" y="0.5" width="4" height="7" fill="#fff"/><ellipse cx="16" cy="4" rx="6.5" ry="2.6" fill="none" stroke="#fff" stroke-width="1.6"/><ellipse cx="32" cy="4" rx="6.5" ry="2.6" fill="none" stroke="#fff" stroke-width="1.6"/><ellipse cx="48" cy="4" rx="6.5" ry="2.6" fill="none" stroke="#fff" stroke-width="1.6"/><ellipse cx="64" cy="4" rx="6.5" ry="2.6" fill="none" stroke="#fff" stroke-width="1.6"/><path d="M4 4h2M74 4h2" stroke="#fff" stroke-width="2"/></svg><svg style="left:462px;top:22px" width="82" height="8" viewBox="0 0 82 8"><path d="M0.5 1l5 3l-5 3M80.5 1l-5 3l5 3" fill="none" stroke="#fff" stroke-width="1.6"/><rect x="6" y="0.5" width="4" height="7" fill="#fff"/><rect x="22" y="0.5" width="4" height="7" fill="#fff"/><rect x="38" y="0.5" width="4" height="7" fill="#fff"/><rect x="54" y="0.5" width="4" height="7" fill="#fff"/><rect x="70" y="0.5" width="4" height="7" fill="#fff"/><ellipse cx="16" cy="4" rx="6.5" ry="2.6" fill="none" stroke="#fff" stroke-width="1.6"/><ellipse cx="32" cy="4" rx="6.5" ry="2.6" fill="none" stroke="#fff" stroke-width="1.6"/><ellipse cx="48" cy="4" rx="6.5" ry="2.6" fill="none" stroke="#fff" stroke-width="1.6"/><ellipse cx="64" cy="4" rx="6.5" ry="2.6" fill="none" stroke="#fff" stroke-width="1.6"/><path d="M4 4h2M74 4h2" stroke="#fff" stroke-width="2"/></svg><div class="t" style="left:190px;top:15px;color:#fff;line-height:18px;transform:scaleX(2);transform-origin:0 0;font-weight:bold"><b class="c" style="font-weight:bold;width:16px;font-size:18.7px;-webkit-text-stroke:0.80px currentColor">高</b><b class="c" style="font-weight:bold;width:16px;font-size:18.7px;-webkit-text-stroke:0.80px currentColor">速</b><b class="c" style="font-weight:bold;width:16px;font-size:18.7px;-webkit-text-stroke:0.80px currentColor">胎</b><b class="c" style="font-weight:bold;width:16px;font-size:18.7px;-webkit-text-stroke:0.80px currentColor">第</b><b class="c" style="font-weight:bold;width:16px;font-size:18.7px;-webkit-text-stroke:0.80px currentColor">二</b><b class="c" style="font-weight:bold;width:16px;font-size:18.7px;-webkit-text-stroke:0.80px currentColor">成</b><b class="c" style="font-weight:bold;width:16px;font-size:18.7px;-webkit-text-stroke:0.80px currentColor">型</b><b class="c" style="font-weight:bold;width:16px;font-size:18.7px;-webkit-text-stroke:0.80px currentColor">機</b></div><div style="left:162px;top:48px;width:81px;height:81px;border:1px solid #00F000"></div><div style="left:176px;top:56px;width:1px;height:73px;background:repeating-linear-gradient(#00F000 0 13px,transparent 13px 19px,#00F000 19px 37px,transparent 37px 43px)"></div><div style="left:239px;top:49px;width:1px;height:78px;background:repeating-linear-gradient(transparent 0 2px,#00F000 2px 20px,transparent 20px 24px)"></div><div style="left:176px;top:127px;width:63px;height:2px;background:#00F000"></div><div style="left:162px;top:48px;width:40px;height:8px;background:#fff;overflow:hidden"><div class="t" style="left:1px;top:0;line-height:8px;font-family:Liberation Mono;font-size:9px;color:#000;letter-spacing:2.6px">Y0000</div></div><div style="left:392px;top:48px;width:81px;height:81px;border:1px solid #00F000"></div><div style="left:406px;top:56px;width:1px;height:73px;background:repeating-linear-gradient(#00F000 0 13px,transparent 13px 19px,#00F000 19px 37px,transparent 37px 43px)"></div><div style="left:469px;top:49px;width:1px;height:78px;background:repeating-linear-gradient(transparent 0 2px,#00F000 2px 20px,transparent 20px 24px)"></div><div style="left:406px;top:127px;width:63px;height:2px;background:#00F000"></div><div style="left:392px;top:48px;width:40px;height:8px;background:#fff;overflow:hidden"><div class="t" style="left:1px;top:0;line-height:8px;font-family:Liberation Mono;font-size:9px;color:#000;letter-spacing:2.6px">Y0000</div></div><div style="left:270px;top:44px;width:99px;height:97px;border:2px solid #fff;overflow:hidden"><svg style="left:0;top:0" width="95" height="93" viewBox="2 2 95 93"><defs><pattern id="ck" width="2" height="2" patternUnits="userSpaceOnUse"><rect width="2" height="2" fill="#000"/><rect width="1" height="1" fill="#fff"/><rect x="1" y="1" width="1" height="1" fill="#fff"/></pattern></defs><path d="M2.0 88.0C5.3 87.5 15.1 87.1 22.0 85.0C28.9 82.9 38.2 78.9 43.5 75.4C48.8 71.9 51.8 67.8 54.0 64.0C56.2 60.2 55.7 56.7 57.0 52.5C58.3 48.3 59.3 43.1 62.0 39.0C64.7 34.9 68.9 30.9 73.0 28.0C77.1 25.1 82.5 22.9 86.5 21.6C90.5 20.3 95.2 20.4 97.0 20.2V97H2z" fill="url(#ck)"/><path d="M2.0 77.0C5.3 76.3 15.8 75.3 22.0 73.0C28.2 70.7 34.8 66.4 39.0 63.0C43.2 59.6 45.4 56.5 47.5 52.5C49.6 48.5 49.9 43.1 51.5 39.0C53.1 34.9 54.3 31.7 57.0 28.0C59.7 24.3 63.5 20.0 67.7 17.0C72.0 14.0 77.6 11.4 82.5 10.0C87.4 8.6 94.6 9.0 97.0 8.8L97 20.2C95.2 20.4 90.5 20.3 86.5 21.6C82.5 22.9 77.1 25.1 73.0 28.0C68.9 30.9 64.7 34.9 62.0 39.0C59.3 43.1 58.3 48.3 57.0 52.5C55.7 56.7 56.2 60.2 54.0 64.0C51.8 67.8 48.8 71.9 43.5 75.4C38.2 78.9 28.9 82.9 22.0 85.0C15.1 87.1 5.3 87.5 2.0 88.0z" fill="#0000F0"/><path d="M16 36.5h9M20.5 32v9" stroke="#fff"/><path d="M47 48.5h10M52.5 43v11" stroke="#F0F000"/></svg></div><div class="t" style="left:259px;top:158px;color:#444;font-family:Liberation Mono;font-size:13.3px;line-height:13px">SEYEN MACHINERY</div><div class="t" style="left:239px;top:176px;color:#fff;line-height:16px;font-weight:bold"><b class="c" style="color:#8A8A8A;font-weight:bold;width:16px;font-size:18.7px;-webkit-text-stroke:0.80px currentColor">精</b><b class="c" style="color:#8A8A8A;font-weight:bold;width:16px;font-size:18.7px;-webkit-text-stroke:0.80px currentColor">元</b><b class="c" style="font-weight:bold;width:16px;font-size:18.7px;-webkit-text-stroke:0.80px currentColor">機</b><b class="c" style="font-weight:bold;width:16px;font-size:18.7px;-webkit-text-stroke:0.80px currentColor">械</b><b class="c" style="font-weight:bold;width:16px;font-size:18.7px;-webkit-text-stroke:0.80px currentColor">股</b><b class="c" style="font-weight:bold;width:16px;font-size:18.7px;-webkit-text-stroke:0.80px currentColor">份</b><b class="c" style="font-weight:bold;width:16px;font-size:18.7px;-webkit-text-stroke:0.80px currentColor">有</b><b class="c" style="font-weight:bold;width:16px;font-size:18.7px;-webkit-text-stroke:0.80px currentColor">限</b><b class="c" style="font-weight:bold;width:16px;font-size:18.7px;-webkit-text-stroke:0.80px currentColor">公</b><b class="c" style="font-weight:bold;width:16px;font-size:18.7px;-webkit-text-stroke:0.80px currentColor">司</b></div><div style="left:8px;top:184px;width:113px;height:49px;border:1px solid #00F000"></div><div style="left:14px;top:189px;width:101px;height:39px;border:1px solid #fff;border-width:1px 2px 2px 1px"></div><svg style="left:8px;top:184px" width="113" height="49"><path d="M1 1l6 5M112 1l-6 5M1 48l6 -5M112 48l-6 -5" stroke="#fff" stroke-width="1"/></svg><div style="left:127px;top:184px;width:1px;height:49px;background:repeating-linear-gradient(#00F000 0 10px,transparent 10px 13px)"></div><div style="left:8px;top:233px;width:120px;height:1px;background:repeating-linear-gradient(90deg,#00F000 0 12px,transparent 12px 15px)"></div><div class="t" style="left:8px;top:200px;width:113px;text-align:center;color:#F00000;line-height:16px"><b class="a" style="font-size:13.33px;letter-spacing:0.00px">2ND</b><b class="c" style="width:16px;font-size:18.7px;-webkit-text-stroke:0.80px currentColor">修</b><b class="c" style="width:16px;font-size:18.7px;-webkit-text-stroke:0.80px currentColor">改</b><b class="c" style="width:16px;font-size:18.7px;-webkit-text-stroke:0.80px currentColor">记</b><b class="c" style="width:16px;font-size:18.7px;-webkit-text-stroke:0.80px currentColor">录</b></div><div style="left:8px;top:184px;width:31px;height:7px;background:#fff;overflow:hidden"><div class="t" style="left:1px;top:0;line-height:7px;font-family:Liberation Mono;font-size:8px;color:#000;letter-spacing:2.6px">M383</div></div><div style="left:520px;top:180px;width:113px;height:49px;border:1px solid #00F000"></div><div style="left:526px;top:185px;width:101px;height:39px;border:1px solid #fff;border-width:1px 2px 2px 1px"></div><svg style="left:520px;top:180px" width="113" height="49"><path d="M1 1l6 5M112 1l-6 5M1 48l6 -5M112 48l-6 -5" stroke="#fff" stroke-width="1"/></svg><div style="left:639px;top:180px;width:1px;height:49px;background:repeating-linear-gradient(#00F000 0 10px,transparent 10px 13px)"></div><div style="left:520px;top:229px;width:120px;height:1px;background:repeating-linear-gradient(90deg,#00F000 0 12px,transparent 12px 15px)"></div><div class="t" style="left:520px;top:196px;width:113px;text-align:center;color:#F00000;line-height:16px"><b class="c" style="width:16px;font-size:18.7px;-webkit-text-stroke:0.80px currentColor">定</b><b class="c" style="width:16px;font-size:18.7px;-webkit-text-stroke:0.80px currentColor">点</b><b class="c" style="width:16px;font-size:18.7px;-webkit-text-stroke:0.80px currentColor">设</b><b class="c" style="width:16px;font-size:18.7px;-webkit-text-stroke:0.80px currentColor">定</b></div><div style="left:520px;top:176px;width:120px;height:1px;background:repeating-linear-gradient(90deg,#00F000 0 14px,transparent 14px 18px)"></div><div style="left:8px;top:240px;width:113px;height:49px;border:1px solid #00F000"></div><div style="left:14px;top:245px;width:101px;height:39px;border:1px solid #fff;border-width:1px 2px 2px 1px"></div><svg style="left:8px;top:240px" width="113" height="49"><path d="M1 1l6 5M112 1l-6 5M1 48l6 -5M112 48l-6 -5" stroke="#fff" stroke-width="1"/></svg><div style="left:127px;top:240px;width:1px;height:49px;background:repeating-linear-gradient(#00F000 0 10px,transparent 10px 13px)"></div><div style="left:8px;top:289px;width:120px;height:1px;background:repeating-linear-gradient(90deg,#00F000 0 12px,transparent 12px 15px)"></div><div class="t" style="left:8px;top:256px;width:113px;text-align:center;color:#F00000;line-height:16px"><b class="c" style="width:16px;font-size:18.7px;-webkit-text-stroke:0.80px currentColor">產</b><b class="c" style="width:16px;font-size:18.7px;-webkit-text-stroke:0.80px currentColor">品</b><b class="c" style="width:16px;font-size:18.7px;-webkit-text-stroke:0.80px currentColor">規</b><b class="c" style="width:16px;font-size:18.7px;-webkit-text-stroke:0.80px currentColor">格</b><b class="c" style="width:16px;font-size:18.7px;-webkit-text-stroke:0.80px currentColor">選</b><b class="c" style="width:16px;font-size:18.7px;-webkit-text-stroke:0.80px currentColor">擇</b></div><div style="left:8px;top:305px;width:113px;height:48px;border:1px solid #00F000"></div><div style="left:14px;top:310px;width:101px;height:38px;border:1px solid #fff;border-width:1px 2px 2px 1px"></div><svg style="left:8px;top:305px" width="113" height="48"><path d="M1 1l6 5M112 1l-6 5M1 47l6 -5M112 47l-6 -5" stroke="#fff" stroke-width="1"/></svg><div style="left:127px;top:305px;width:1px;height:48px;background:repeating-linear-gradient(#00F000 0 10px,transparent 10px 13px)"></div><div style="left:8px;top:353px;width:120px;height:1px;background:repeating-linear-gradient(90deg,#00F000 0 12px,transparent 12px 15px)"></div><div class="t" style="left:8px;top:321px;width:113px;text-align:center;color:#F00000;line-height:16px"><b class="c" style="width:16px;font-size:18.7px;-webkit-text-stroke:0.80px currentColor">步</b><b class="c" style="width:16px;font-size:18.7px;-webkit-text-stroke:0.80px currentColor">驟</b><b class="c" style="width:16px;font-size:18.7px;-webkit-text-stroke:0.80px currentColor">設</b><b class="c" style="width:16px;font-size:18.7px;-webkit-text-stroke:0.80px currentColor">定</b><b class="c" style="width:16px;font-size:18.7px;-webkit-text-stroke:0.80px currentColor">畫</b><b class="c" style="width:16px;font-size:18.7px;-webkit-text-stroke:0.80px currentColor">面</b></div><div style="left:136px;top:240px;width:113px;height:49px;border:1px solid #00F000"></div><div style="left:142px;top:245px;width:101px;height:39px;border:1px solid #fff;border-width:1px 2px 2px 1px"></div><svg style="left:136px;top:240px" width="113" height="49"><path d="M1 1l6 5M112 1l-6 5M1 48l6 -5M112 48l-6 -5" stroke="#fff" stroke-width="1"/></svg><div style="left:255px;top:240px;width:1px;height:49px;background:repeating-linear-gradient(#00F000 0 10px,transparent 10px 13px)"></div><div style="left:136px;top:289px;width:120px;height:1px;background:repeating-linear-gradient(90deg,#00F000 0 12px,transparent 12px 15px)"></div><div class="t" style="left:136px;top:256px;width:113px;text-align:center;color:#F00000;line-height:16px"><b class="c" style="width:16px;font-size:18.7px;-webkit-text-stroke:0.80px currentColor">其</b><b class="c" style="width:16px;font-size:18.7px;-webkit-text-stroke:0.80px currentColor">它</b><b class="c" style="width:16px;font-size:18.7px;-webkit-text-stroke:0.80px currentColor">資</b><b class="c" style="width:16px;font-size:18.7px;-webkit-text-stroke:0.80px currentColor">料</b><b class="c" style="width:16px;font-size:18.7px;-webkit-text-stroke:0.80px currentColor">設</b><b class="c" style="width:16px;font-size:18.7px;-webkit-text-stroke:0.80px currentColor">定</b></div><div style="left:136px;top:305px;width:113px;height:48px;border:1px solid #00F000"></div><div style="left:142px;top:310px;width:101px;height:38px;border:1px solid #fff;border-width:1px 2px 2px 1px"></div><svg style="left:136px;top:305px" width="113" height="48"><path d="M1 1l6 5M112 1l-6 5M1 47l6 -5M112 47l-6 -5" stroke="#fff" stroke-width="1"/></svg><div style="left:255px;top:305px;width:1px;height:48px;background:repeating-linear-gradient(#00F000 0 10px,transparent 10px 13px)"></div><div style="left:136px;top:353px;width:120px;height:1px;background:repeating-linear-gradient(90deg,#00F000 0 12px,transparent 12px 15px)"></div><div class="t" style="left:136px;top:321px;width:113px;text-align:center;color:#F00000;line-height:16px"><b class="c" style="width:16px;font-size:18.7px;-webkit-text-stroke:0.80px currentColor">各</b><b class="c" style="width:16px;font-size:18.7px;-webkit-text-stroke:0.80px currentColor">項</b><b class="c" style="width:16px;font-size:18.7px;-webkit-text-stroke:0.80px currentColor">資</b><b class="c" style="width:16px;font-size:18.7px;-webkit-text-stroke:0.80px currentColor">料</b><b class="c" style="width:16px;font-size:18.7px;-webkit-text-stroke:0.80px currentColor">顯</b><b class="c" style="width:16px;font-size:18.7px;-webkit-text-stroke:0.80px currentColor">示</b></div><div style="left:263px;top:240px;width:113px;height:49px;border:1px solid #00F000"></div><div style="left:269px;top:245px;width:101px;height:39px;border:1px solid #fff;border-width:1px 2px 2px 1px"></div><svg style="left:263px;top:240px" width="113" height="49"><path d="M1 1l6 5M112 1l-6 5M1 48l6 -5M112 48l-6 -5" stroke="#fff" stroke-width="1"/></svg><div style="left:382px;top:240px;width:1px;height:49px;background:repeating-linear-gradient(#00F000 0 10px,transparent 10px 13px)"></div><div style="left:263px;top:289px;width:120px;height:1px;background:repeating-linear-gradient(90deg,#00F000 0 12px,transparent 12px 15px)"></div><div class="t" style="left:263px;top:256px;width:113px;text-align:center;color:#F00000;line-height:16px"><b class="c" style="width:16px;font-size:18.7px;-webkit-text-stroke:0.80px currentColor">生</b><b class="c" style="width:16px;font-size:18.7px;-webkit-text-stroke:0.80px currentColor">産</b><b class="c" style="width:16px;font-size:18.7px;-webkit-text-stroke:0.80px currentColor">條</b><b class="c" style="width:16px;font-size:18.7px;-webkit-text-stroke:0.80px currentColor">數</b><b class="c" style="width:16px;font-size:18.7px;-webkit-text-stroke:0.80px currentColor">計</b><b class="c" style="width:16px;font-size:18.7px;-webkit-text-stroke:0.80px currentColor">錄</b></div><div style="left:263px;top:305px;width:113px;height:48px;border:1px solid #00F000"></div><div style="left:269px;top:310px;width:101px;height:38px;border:1px solid #fff;border-width:1px 2px 2px 1px"></div><svg style="left:263px;top:305px" width="113" height="48"><path d="M1 1l6 5M112 1l-6 5M1 47l6 -5M112 47l-6 -5" stroke="#fff" stroke-width="1"/></svg><div style="left:382px;top:305px;width:1px;height:48px;background:repeating-linear-gradient(#00F000 0 10px,transparent 10px 13px)"></div><div style="left:263px;top:353px;width:120px;height:1px;background:repeating-linear-gradient(90deg,#00F000 0 12px,transparent 12px 15px)"></div><div class="t" style="left:263px;top:321px;width:113px;text-align:center;color:#F00000;line-height:16px"><b class="c" style="width:16px;font-size:18.7px;-webkit-text-stroke:0.80px currentColor">規</b><b class="c" style="width:16px;font-size:18.7px;-webkit-text-stroke:0.80px currentColor">格</b><b class="c" style="width:16px;font-size:18.7px;-webkit-text-stroke:0.80px currentColor">步</b><b class="c" style="width:16px;font-size:18.7px;-webkit-text-stroke:0.80px currentColor">驟</b><b class="c" style="width:16px;font-size:18.7px;-webkit-text-stroke:0.80px currentColor">顯</b><b class="c" style="width:16px;font-size:18.7px;-webkit-text-stroke:0.80px currentColor">示</b></div><div style="left:391px;top:240px;width:113px;height:49px;border:1px solid #00F000"></div><div style="left:397px;top:245px;width:101px;height:39px;border:1px solid #fff;border-width:1px 2px 2px 1px"></div><svg style="left:391px;top:240px" width="113" height="49"><path d="M1 1l6 5M112 1l-6 5M1 48l6 -5M112 48l-6 -5" stroke="#fff" stroke-width="1"/></svg><div style="left:510px;top:240px;width:1px;height:49px;background:repeating-linear-gradient(#00F000 0 10px,transparent 10px 13px)"></div><div style="left:391px;top:289px;width:120px;height:1px;background:repeating-linear-gradient(90deg,#00F000 0 12px,transparent 12px 15px)"></div><div class="t" style="left:391px;top:256px;width:113px;text-align:center;color:#F00000;line-height:16px"><b class="c" style="width:16px;font-size:18.7px;-webkit-text-stroke:0.80px currentColor">異</b><b class="c" style="width:16px;font-size:18.7px;-webkit-text-stroke:0.80px currentColor">常</b><b class="c" style="width:16px;font-size:18.7px;-webkit-text-stroke:0.80px currentColor">發</b><b class="c" style="width:16px;font-size:18.7px;-webkit-text-stroke:0.80px currentColor">生</b><b class="c" style="width:16px;font-size:18.7px;-webkit-text-stroke:0.80px currentColor">顯</b><b class="c" style="width:16px;font-size:18.7px;-webkit-text-stroke:0.80px currentColor">示</b></div><div style="left:391px;top:305px;width:113px;height:48px;border:1px solid #00F000"></div><div style="left:397px;top:310px;width:101px;height:38px;border:1px solid #fff;border-width:1px 2px 2px 1px"></div><svg style="left:391px;top:305px" width="113" height="48"><path d="M1 1l6 5M112 1l-6 5M1 47l6 -5M112 47l-6 -5" stroke="#fff" stroke-width="1"/></svg><div style="left:510px;top:305px;width:1px;height:48px;background:repeating-linear-gradient(#00F000 0 10px,transparent 10px 13px)"></div><div style="left:391px;top:353px;width:120px;height:1px;background:repeating-linear-gradient(90deg,#00F000 0 12px,transparent 12px 15px)"></div><div class="t" style="left:391px;top:321px;width:113px;text-align:center;color:#F00000;line-height:16px"><b class="c" style="width:16px;font-size:18.7px;-webkit-text-stroke:0.80px currentColor">纏</b><b class="c" style="width:16px;font-size:18.7px;-webkit-text-stroke:0.80px currentColor">繞</b><b class="c" style="width:16px;font-size:18.7px;-webkit-text-stroke:0.80px currentColor">規</b><b class="c" style="width:16px;font-size:18.7px;-webkit-text-stroke:0.80px currentColor">格</b><b class="c" style="width:16px;font-size:18.7px;-webkit-text-stroke:0.80px currentColor">選</b><b class="c" style="width:16px;font-size:18.7px;-webkit-text-stroke:0.80px currentColor">擇</b></div><div style="left:519px;top:240px;width:113px;height:49px;border:1px solid #00F000"></div><div style="left:525px;top:245px;width:101px;height:39px;border:1px solid #fff;border-width:1px 2px 2px 1px"></div><svg style="left:519px;top:240px" width="113" height="49"><path d="M1 1l6 5M112 1l-6 5M1 48l6 -5M112 48l-6 -5" stroke="#fff" stroke-width="1"/></svg><div style="left:638px;top:240px;width:1px;height:49px;background:repeating-linear-gradient(#00F000 0 10px,transparent 10px 13px)"></div><div style="left:519px;top:289px;width:120px;height:1px;background:repeating-linear-gradient(90deg,#00F000 0 12px,transparent 12px 15px)"></div><div class="t" style="left:519px;top:249px;width:113px;text-align:center;color:#F00000;line-height:16px"><b class="c" style="width:16px;font-size:18.7px;-webkit-text-stroke:0.80px currentColor">可</b><b class="c" style="width:16px;font-size:18.7px;-webkit-text-stroke:0.80px currentColor">程</b><b class="c" style="width:16px;font-size:18.7px;-webkit-text-stroke:0.80px currentColor">式</b><b class="c" style="width:16px;font-size:18.7px;-webkit-text-stroke:0.80px currentColor">控</b><b class="c" style="width:16px;font-size:18.7px;-webkit-text-stroke:0.80px currentColor">制</b><b class="c" style="width:16px;font-size:18.7px;-webkit-text-stroke:0.80px currentColor">器</b><br><b class="c" style="width:16px;font-size:18.7px;-webkit-text-stroke:0.80px currentColor">輸</b><b class="c" style="width:16px;font-size:18.7px;-webkit-text-stroke:0.80px currentColor">出</b><b class="c" style="width:16px;font-size:18.7px;-webkit-text-stroke:0.80px currentColor">輸</b><b class="c" style="width:16px;font-size:18.7px;-webkit-text-stroke:0.80px currentColor">入</b><b class="c" style="width:16px;font-size:18.7px;-webkit-text-stroke:0.80px currentColor">顯</b><b class="c" style="width:16px;font-size:18.7px;-webkit-text-stroke:0.80px currentColor">示</b></div><div style="left:519px;top:305px;width:113px;height:48px;border:1px solid #00F000"></div><div style="left:525px;top:310px;width:101px;height:38px;border:1px solid #fff;border-width:1px 2px 2px 1px"></div><svg style="left:519px;top:305px" width="113" height="48"><path d="M1 1l6 5M112 1l-6 5M1 47l6 -5M112 47l-6 -5" stroke="#fff" stroke-width="1"/></svg><div style="left:638px;top:305px;width:1px;height:48px;background:repeating-linear-gradient(#00F000 0 10px,transparent 10px 13px)"></div><div style="left:519px;top:353px;width:120px;height:1px;background:repeating-linear-gradient(90deg,#00F000 0 12px,transparent 12px 15px)"></div><div class="t" style="left:519px;top:321px;width:113px;text-align:center;color:#F00000;line-height:16px"><b class="c" style="width:16px;font-size:18.7px;-webkit-text-stroke:0.80px currentColor">程</b><b class="c" style="width:16px;font-size:18.7px;-webkit-text-stroke:0.80px currentColor">式</b><b class="c" style="width:16px;font-size:18.7px;-webkit-text-stroke:0.80px currentColor">步</b><b class="c" style="width:16px;font-size:18.7px;-webkit-text-stroke:0.80px currentColor">序</b><b class="c" style="width:16px;font-size:18.7px;-webkit-text-stroke:0.80px currentColor">顯</b><b class="c" style="width:16px;font-size:18.7px;-webkit-text-stroke:0.80px currentColor">示</b></div><div style="left:315px;top:240px;width:11px;height:1px;background:#E000E0"></div><div style="left:320px;top:235px;width:1px;height:12px;background:#fff"></div><div style="left:66px;top:360px;width:55px;height:25px;border:2px solid #fff"></div><div style="left:70px;top:371px;width:32px;height:9px;border:1px solid #00F000"><div class="t" style="left:2px;top:-3px;color:#1010F0;font-family:Liberation Mono;font-weight:bold;font-size:11px;line-height:11px;letter-spacing:5px">01</div></div><div style="left:70px;top:365px;width:40px;height:7px;background:#fff;overflow:hidden"><div class="t" style="left:1px;top:0;line-height:7px;font-family:Liberation Mono;font-size:8px;color:#000;letter-spacing:3.1px">D2106</div></div><div class="t" style="left:103px;top:364px;color:#fff;line-height:18px"><b class="c" style="width:15px;font-size:17.5px;-webkit-text-stroke:0.75px currentColor">年</b></div><div style="left:158px;top:360px;width:55px;height:25px;border:2px solid #fff"></div><div style="left:162px;top:371px;width:32px;height:9px;border:1px solid #00F000"><div class="t" style="left:2px;top:-3px;color:#1010F0;font-family:Liberation Mono;font-weight:bold;font-size:11px;line-height:11px;letter-spacing:5px">01</div></div><div style="left:162px;top:365px;width:40px;height:7px;background:#fff;overflow:hidden"><div class="t" style="left:1px;top:0;line-height:7px;font-family:Liberation Mono;font-size:8px;color:#000;letter-spacing:3.1px">D2107</div></div><div class="t" style="left:195px;top:364px;color:#fff;line-height:18px"><b class="c" style="width:15px;font-size:17.5px;-webkit-text-stroke:0.75px currentColor">月</b></div><div style="left:250px;top:360px;width:55px;height:25px;border:2px solid #fff"></div><div style="left:254px;top:371px;width:32px;height:9px;border:1px solid #00F000"><div class="t" style="left:2px;top:-3px;color:#1010F0;font-family:Liberation Mono;font-weight:bold;font-size:11px;line-height:11px;letter-spacing:5px">01</div></div><div style="left:254px;top:365px;width:40px;height:7px;background:#fff;overflow:hidden"><div class="t" style="left:1px;top:0;line-height:7px;font-family:Liberation Mono;font-size:8px;color:#000;letter-spacing:3.1px">D2108</div></div><div class="t" style="left:287px;top:364px;color:#fff;line-height:18px"><b class="c" style="width:15px;font-size:17.5px;-webkit-text-stroke:0.75px currentColor">日</b></div><div style="left:341px;top:360px;width:55px;height:25px;border:2px solid #fff"></div><div style="left:345px;top:371px;width:32px;height:9px;border:1px solid #00F000"><div class="t" style="left:2px;top:-3px;color:#1010F0;font-family:Liberation Mono;font-weight:bold;font-size:11px;line-height:11px;letter-spacing:5px">01</div></div><div style="left:345px;top:365px;width:40px;height:7px;background:#fff;overflow:hidden"><div class="t" style="left:1px;top:0;line-height:7px;font-family:Liberation Mono;font-size:8px;color:#000;letter-spacing:3.1px">D2100</div></div><div class="t" style="left:378px;top:364px;color:#fff;line-height:18px"><b class="c" style="width:15px;font-size:17.5px;-webkit-text-stroke:0.75px currentColor">時</b></div><div style="left:433px;top:360px;width:55px;height:25px;border:2px solid #fff"></div><div style="left:437px;top:371px;width:32px;height:9px;border:1px solid #00F000"><div class="t" style="left:2px;top:-3px;color:#1010F0;font-family:Liberation Mono;font-weight:bold;font-size:11px;line-height:11px;letter-spacing:5px">01</div></div><div style="left:437px;top:365px;width:40px;height:7px;background:#fff;overflow:hidden"><div class="t" style="left:1px;top:0;line-height:7px;font-family:Liberation Mono;font-size:8px;color:#000;letter-spacing:3.1px">D2102</div></div><div class="t" style="left:470px;top:364px;color:#fff;line-height:18px"><b class="c" style="width:15px;font-size:17.5px;-webkit-text-stroke:0.75px currentColor">分</b></div><div style="left:526px;top:360px;width:55px;height:25px;border:2px solid #fff"></div><div style="left:530px;top:371px;width:32px;height:9px;border:1px solid #00F000"><div class="t" style="left:2px;top:-3px;color:#1010F0;font-family:Liberation Mono;font-weight:bold;font-size:11px;line-height:11px;letter-spacing:5px">01</div></div><div style="left:530px;top:365px;width:40px;height:7px;background:#fff;overflow:hidden"><div class="t" style="left:1px;top:0;line-height:7px;font-family:Liberation Mono;font-size:8px;color:#000;letter-spacing:3.1px">D2104</div></div><div class="t" style="left:563px;top:364px;color:#fff;line-height:18px"><b class="c" style="width:15px;font-size:17.5px;-webkit-text-stroke:0.75px currentColor">秒</b></div><div style="left:130px;top:372px;width:21px;height:2px;background:#fff"></div><div style="left:222px;top:372px;width:21px;height:2px;background:#fff"></div><div style="left:404px;top:372px;width:21px;height:2px;background:#fff"></div><div style="left:496px;top:372px;width:21px;height:2px;background:#fff"></div><svg style="left:316px;top:370px" width="17" height="8"><path d="M0 4h17M4 0l9 8M13 0l-9 8M8.5 0v8" stroke="#fff" stroke-width="2"/></svg></div><div style="left:892px;top:114px;width:21px;height:21px;background:radial-gradient(circle at 30% 30%,#F08060,#E35A34);border:1px solid #fff;border-radius:3px"><svg style="left:0;top:0" width="19" height="19"><path d="M5 5l9 9M14 5l-9 9" stroke="#fff" stroke-width="2"/></svg></div><div style="left:869px;top:114px;width:21px;height:21px;background:radial-gradient(circle at 30% 30%,#6A9BFA,#2B6CF5);border:1px solid #fff;border-radius:3px"><div style="left:4px;top:4px;width:11px;height:11px;border:1px solid #fff;border-top-width:3px"></div></div><div style="left:846px;top:114px;width:21px;height:21px;background:radial-gradient(circle at 30% 30%,#6A9BFA,#2B6CF5);border:1px solid #fff;border-radius:3px"><div style="left:4px;top:11px;width:7px;height:3px;background:#fff"></div></div><svg style="left:273px;top:116px" width="17" height="17"><rect x="0" y="0" width="16" height="2" fill="#fff"/><rect x="0" y="14" width="16" height="2" fill="#fff"/><rect x="0.5" y="2.5" width="15" height="11" fill="#D0D0D0" stroke="#10108A"/><text x="1" y="8" font-size="6" font-family="Liberation Sans" font-weight="bold" fill="#1010E0">GTD</text><text x="5" y="14" font-size="9" font-family="Liberation Sans" font-weight="bold" fill="#10E010">2</text></svg><div class="t" style="left:293px;top:117px;color:#fff;line-height:15px;text-shadow:1px 1px #0A2A80"><b class="a" style="font-weight:bold;font-size:13.33px;letter-spacing:0.00px">B-1:</b><b class="c" style="font-weight:bold;width:14px;font-size:16.3px;-webkit-text-stroke:0.70px currentColor">主</b><b class="c" style="font-weight:bold;width:14px;font-size:16.3px;-webkit-text-stroke:0.70px currentColor">畫</b><b class="c" style="font-weight:bold;width:14px;font-size:16.3px;-webkit-text-stroke:0.70px currentColor">面</b></div>
</body></html>
